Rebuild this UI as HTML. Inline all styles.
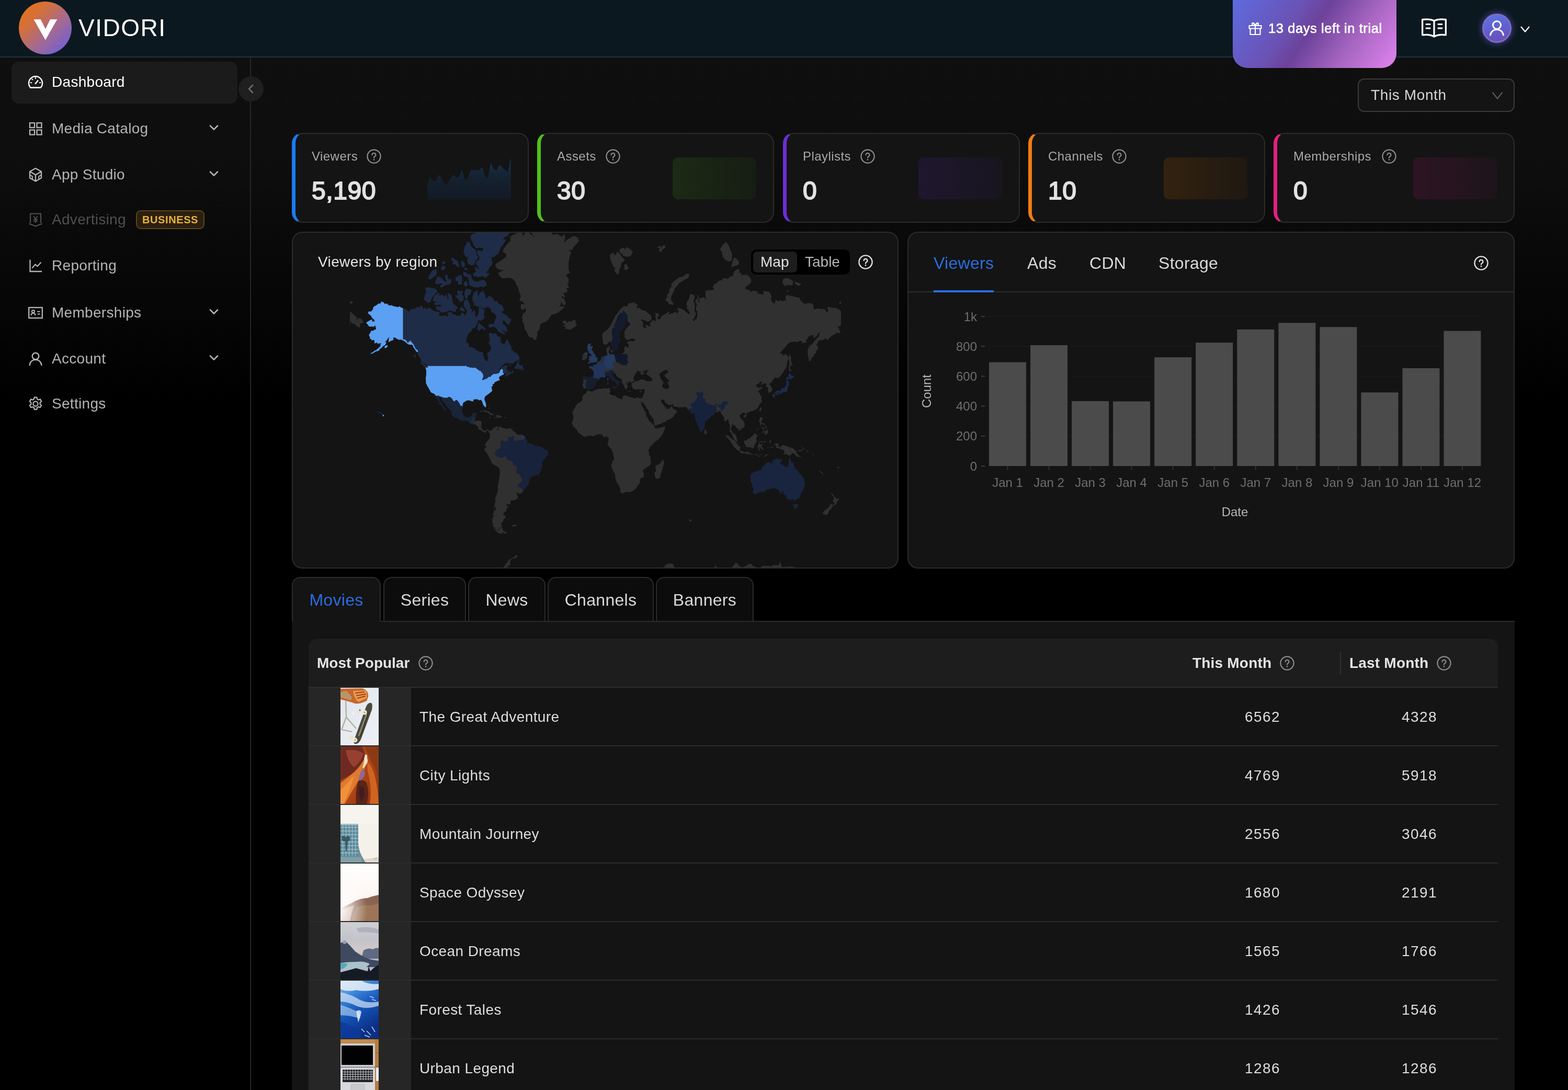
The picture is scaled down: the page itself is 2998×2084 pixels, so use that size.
<!DOCTYPE html><html><head><meta charset="utf-8"><title>Vidori Dashboard</title><style>
*{box-sizing:border-box;margin:0;padding:0}
html,body{width:2998px;height:2084px;overflow:hidden;background:#000}
body{font-family:"Liberation Sans",Arial,sans-serif;color:#dcdcdc;position:relative;
 background:linear-gradient(180deg,#0f0f0f 0px,#0e0e0e 300px,#000 780px,#000 100%)}
#root{position:absolute;left:0;top:0;width:2998px;height:2084px;will-change:transform}
.abs{position:absolute}
#hdr{position:absolute;left:0;top:0;width:2998px;height:110px;background:#0c181f;border-bottom:2px solid #22323c}
#logo{position:absolute;left:36px;top:3px;width:101px;height:101px;border-radius:50%;
 background:linear-gradient(135deg,#e8701a 8%,#d4703a 30%,#a0689a 62%,#6d5fd8 92%)}
#brand{position:absolute;left:150px;top:26px;font-size:46px;line-height:54px;color:#fff;letter-spacing:1.5px;font-weight:400}
#trial{position:absolute;left:2357px;top:-30px;width:313px;height:160px;border-radius:28px;
 background:linear-gradient(125deg,#5b6fe6 0%,#6b52b4 38%,#6c429a 50%,#a565c0 72%,#e184f0 100%)}
#trial span{position:absolute;left:68px;top:67px;font-size:25.4px;line-height:34px;font-weight:400;-webkit-text-stroke:0.7px #fff;color:#fff;white-space:nowrap;letter-spacing:0.62px}
#side{position:absolute;left:0;top:110px;width:480px;height:1974px;border-right:2px solid #262626}
.mi{position:absolute;left:22px;width:432px;height:80px;border-radius:14px;color:#b4b4b4;font-size:28px}
.mi.act{background:#1b1b1b;color:#fff}
.mi.dis{color:#4f4f4f}
.mi .ic{position:absolute;left:31px;top:24px;width:30px;height:30px}
.mi .tx{position:absolute;left:77px;top:21px;line-height:36px;white-space:nowrap;letter-spacing:0.3px}
.mi .chev{position:absolute;left:377px;top:27px;width:20px;height:20px}
.badge{position:absolute;left:238px;top:21px;width:131px;height:36px;border:2px solid #5e4514;border-radius:9px;background:#2a1f12;color:#e8b13a;
 font-size:20px;font-weight:700;line-height:32px;text-align:center;letter-spacing:0.6px}
#collapse{position:absolute;left:456px;top:146px;width:48px;height:48px;border-radius:50%;background:#1f1f1f}
.card{position:absolute;background:#141414;border:2px solid #2b2b2b;border-radius:20px;overflow:hidden}
.stat .lbl{position:absolute;left:31px;top:27px;font-size:24px;line-height:32px;color:#a9a9a9;letter-spacing:0.45px;white-space:nowrap}
.stat .val{position:absolute;left:31px;top:79px;font-size:48px;line-height:60px;color:#e2e2e2;font-weight:400;-webkit-text-stroke:1.9px #e2e2e2;letter-spacing:0.6px}
.stat .bar{display:none}
.stat .spark{position:absolute;right:32px;top:45px;width:160px;height:80px;border-radius:10px}
.q{position:absolute}
</style></head><body><div id="root"><div id="hdr"><div id="logo"><svg width="101" height="101" viewBox="0 0 101 101"><path d="M28.5 34h13.200l9.200 18.500L60 34h13.300L50.800 73.500z" fill="#fff"/></svg></div><div id="brand">VIDORI</div><div id="trial"><svg class="abs" style="left:29px;top:70px" width="28" height="28" viewBox="0 0 28 28" fill="none" stroke="#fff" stroke-width="2.200" stroke-linejoin="round"><rect x="2.500" y="9" width="23" height="5.500"/><path d="M4.500 14.500V26h19V14.500M14 9v17"/><path d="M14 9C11 9 8 8 8 5.500S11.500 2.500 14 9zM14 9c3 0 6-1 6-3.500S16.500 2.500 14 9z"/></svg><span>13 days left in trial</span></div><svg class="abs" style="left:2717px;top:34px" width="50" height="40" viewBox="0 0 52 42" fill="none" stroke="#fff" stroke-width="3.400" stroke-linejoin="round"><path d="M26 6C20 3 10 2.500 2.500 3.500v31C10 33.500 20 34 26 38c6-4 16-4.500 23.500-3.500v-31C42 2.500 32 3 26 6z"/><path d="M26 6v32" /><path d="M9 13h10M9 21h10M33 13h10M33 21h10" stroke-width="3"/></svg><div class="abs" style="left:2834px;top:26px;width:56px;height:56px;border-radius:50%;background:linear-gradient(165deg,#5a70e4 10%,#6a4fb6 90%);border:3px solid #7d6cc6;box-shadow:0 0 12px 2px rgba(110,100,220,.5)"><svg width="50" height="50" viewBox="0 0 50 50" fill="none" stroke="#fff" stroke-width="3" stroke-linecap="round"><circle cx="25" cy="19" r="7.500"/><path d="M12.500 38c1.500-7 6.500-10.500 12.500-10.500S36 31 37.500 38"/></svg></div><svg class="abs" style="left:2906px;top:48px" width="20" height="16" viewBox="0 0 20 16" fill="none" stroke="#fff" stroke-width="2.200"><path d="M2 3l8 9.500L18 3"/></svg></div><div id="side"><div class="mi act" style="top:8px"><svg class="ic" viewBox="0 0 30 30" fill="none" stroke="currentColor" stroke-width="2.4" stroke-linecap="round" stroke-linejoin="round"><path d="M5.2 25.5h19.6a13 13 0 1 0-19.6 0z"/><path d="M15 17.5l4.3-5.3" stroke-width="2.6"/><circle cx="15" cy="17.6" r="1.4" fill="currentColor" stroke="none"/><path d="M15 6.4v1.6M8.3 9.3l1.1 1.1M5.6 16h1.6M22.8 16h1.6" stroke-width="2"/></svg><span class="tx">Dashboard</span></div><div class="mi " style="top:97px"><svg class="ic" viewBox="0 0 30 30" fill="none" stroke="currentColor" stroke-width="2.3"><rect x="4" y="4" width="9" height="9"/><rect x="17.5" y="4" width="9" height="9"/><rect x="4" y="17.5" width="9" height="9"/><rect x="17.5" y="17.5" width="9" height="9"/></svg><span class="tx">Media Catalog</span><svg class="chev" viewBox="0 0 20 20" fill="none" stroke="currentColor" stroke-width="2.6" stroke-linecap="round" stroke-linejoin="round"><path d="M3 6.500l7 7 7-7"/></svg></div><div class="mi " style="top:185px"><svg class="ic" viewBox="0 0 30 30" fill="none" stroke="currentColor" stroke-width="2.3" stroke-linejoin="round"><path d="M15 2.8l11 6.2v12.2L15 27.4 4 21.2V9z"/><path d="M4.4 9.2L15 15.2l10.6-6M15 15.2v12"/><path d="M4.2 15.5l4.6 2.6v5.2M25.8 15.5l-4.6 2.6v5.2" stroke-width="2"/></svg><span class="tx">App Studio</span><svg class="chev" viewBox="0 0 20 20" fill="none" stroke="currentColor" stroke-width="2.6" stroke-linecap="round" stroke-linejoin="round"><path d="M3 6.500l7 7 7-7"/></svg></div><div class="mi dis" style="top:271px"><svg class="ic" viewBox="0 0 30 30" fill="none" stroke="currentColor" stroke-width="2.2" stroke-linejoin="round"><path d="M5 21V3.5h20V21"/><path d="M2.5 22.5L15 27.5l12.5-5" /><path d="M11 8l4 5.5L19 8M15 13.5V21M11.2 14.5h7.6M11.2 17.7h7.6" stroke-width="1.9"/></svg><span class="tx">Advertising</span><span class="badge">BUSINESS</span></div><div class="mi " style="top:359px"><svg class="ic" viewBox="0 0 30 30" fill="none" stroke="currentColor" stroke-width="2.3" stroke-linejoin="miter"><path d="M4.5 3.5v22.5h22.5"/><path d="M8.5 19.5l6-7 4 3.5 7-7.5" stroke-width="2.2"/></svg><span class="tx">Reporting</span></div><div class="mi " style="top:449px"><svg class="ic" viewBox="0 0 30 30" fill="none" stroke="currentColor" stroke-width="2.3"><rect x="2.2" y="5" width="25.6" height="20"/><circle cx="10.5" cy="12.6" r="2.5" stroke-width="2"/><path d="M6.3 20c.4-2.8 2-4.2 4.2-4.2s3.8 1.4 4.2 4.2M18 12.8h5.5M18.8 17.4h4.7" stroke-width="2"/></svg><span class="tx">Memberships</span><svg class="chev" viewBox="0 0 20 20" fill="none" stroke="currentColor" stroke-width="2.6" stroke-linecap="round" stroke-linejoin="round"><path d="M3 6.500l7 7 7-7"/></svg></div><div class="mi " style="top:537px"><svg class="ic" viewBox="0 0 30 30" fill="none" stroke="currentColor" stroke-width="2.4" stroke-linecap="round"><circle cx="15" cy="10" r="6.3"/><path d="M3.6 27c1-6.6 5.6-10.3 11.4-10.3S25.4 20.400 26.4 27"/></svg><span class="tx">Account</span><svg class="chev" viewBox="0 0 20 20" fill="none" stroke="currentColor" stroke-width="2.6" stroke-linecap="round" stroke-linejoin="round"><path d="M3 6.500l7 7 7-7"/></svg></div><div class="mi " style="top:623px"><svg class="ic" viewBox="0 0 30 30" fill="none" stroke="currentColor" stroke-width="2.2" stroke-linejoin="round"><circle cx="15" cy="15" r="4.6"/><path d="M12.7 2.600h4.6l.8 3.500 2.400 1.400 3.400-1.100 2.300 4-2.600 2.400v2.800l2.600 2.400-2.300 4-3.400-1.100-2.400 1.400-.8 3.500h-4.600l-.8-3.500-2.400-1.400-3.400 1.100-2.300-4 2.600-2.400v-2.800l-2.600-2.400 2.300-4 3.400 1.100 2.400-1.400z"/></svg><span class="tx">Settings</span></div></div><div id="collapse"><svg class="abs" style="left:15px;top:14px" width="18" height="20" viewBox="0 0 18 20" fill="none" stroke="#6a6a6a" stroke-width="2.800" stroke-linecap="round" stroke-linejoin="round"><path d="M12 3L5 10l7 7"/></svg></div><div class="abs" style="left:2596px;top:150px;width:300px;height:64px;border:2px solid #3a3a3a;border-radius:12px;background:#141414"><span class="abs" style="left:23px;top:12px;font-size:28px;line-height:36px;color:#d6d6d6;letter-spacing:0.62px;white-space:nowrap">This Month</span><svg class="abs" style="left:253px;top:21px" width="24" height="20" viewBox="0 0 24 20" fill="none" stroke="#5a5a5a" stroke-width="2.200"><path d="M2.500 3.500l9.500 12 9.500-12"/></svg></div><div class="card stat" style="left:558px;top:254px;width:453px;height:172px;border-left:7px solid #1a7bf2"><div class="lbl">Viewers</div><svg class="q" style="left:136px;top:29px" width="28" height="28" viewBox="0 0 28 28"><circle cx="14" cy="14" r="12.6" fill="none" stroke="#8c8c8c" stroke-width="2.2"/><path d="M10.6 11.2a3.4 3.4 0 1 1 4.9 3.05c-.95.5-1.5 1.1-1.5 2.1v.5" fill="none" stroke="#8c8c8c" stroke-width="2.09" stroke-linecap="round"/><circle cx="14" cy="20.3" r="1.35" fill="#8c8c8c"/></svg><div class="val">5,190</div><svg class="spark" style="border-radius:0;overflow:visible" viewBox="0 0 160 80"><defs><linearGradient id="sg" x1="0" y1="0" x2="0" y2="1"><stop offset="0" stop-color="#17324f"/><stop offset=".5" stop-color="#15212f"/><stop offset="1" stop-color="#131a26"/></linearGradient></defs><path d="M0 80 L0 52.3 L1 50 L5.2 37.1 L11 45.8 L16.2 44.4 L22 33.2 L27.2 38.7 L33.4 52.8 L38.2 51.2 L42.9 42.3 L49.4 32.9 L55.4 38.5 L60.6 37.6 L66.2 23 L72.1 42.9 L76.8 40.8 L82.9 24.3 L99.3 24 L104.5 18.3 L110.3 35.5 L115.5 40.6 L121.2 9.4 L127 22 L132.2 25.1 L138 13.4 L149 24.6 L154.2 27.2 L159.7 0.5 L160 80Z" fill="url(#sg)"/></svg></div><div class="card stat" style="left:1027px;top:254px;width:453px;height:172px;border-left:7px solid #4fc21a"><div class="lbl">Assets</div><svg class="q" style="left:124px;top:29px" width="28" height="28" viewBox="0 0 28 28"><circle cx="14" cy="14" r="12.6" fill="none" stroke="#8c8c8c" stroke-width="2.2"/><path d="M10.6 11.2a3.4 3.4 0 1 1 4.9 3.05c-.95.5-1.5 1.1-1.5 2.1v.5" fill="none" stroke="#8c8c8c" stroke-width="2.09" stroke-linecap="round"/><circle cx="14" cy="20.3" r="1.35" fill="#8c8c8c"/></svg><div class="val">30</div><div class="spark" style="background:linear-gradient(90deg,#1c2a14,#161d14)"></div></div><div class="card stat" style="left:1497px;top:254px;width:453px;height:172px;border-left:7px solid #6a2fd6"><div class="lbl">Playlists</div><svg class="q" style="left:141px;top:29px" width="28" height="28" viewBox="0 0 28 28"><circle cx="14" cy="14" r="12.6" fill="none" stroke="#8c8c8c" stroke-width="2.2"/><path d="M10.6 11.2a3.4 3.4 0 1 1 4.9 3.05c-.95.5-1.5 1.1-1.5 2.1v.5" fill="none" stroke="#8c8c8c" stroke-width="2.09" stroke-linecap="round"/><circle cx="14" cy="20.3" r="1.35" fill="#8c8c8c"/></svg><div class="val">0</div><div class="spark" style="background:linear-gradient(90deg,#1f172e,#18151f)"></div></div><div class="card stat" style="left:1966px;top:254px;width:453px;height:172px;border-left:7px solid #f07c12"><div class="lbl">Channels</div><svg class="q" style="left:153px;top:29px" width="28" height="28" viewBox="0 0 28 28"><circle cx="14" cy="14" r="12.6" fill="none" stroke="#8c8c8c" stroke-width="2.2"/><path d="M10.6 11.2a3.4 3.4 0 1 1 4.9 3.05c-.95.5-1.5 1.1-1.5 2.1v.5" fill="none" stroke="#8c8c8c" stroke-width="2.09" stroke-linecap="round"/><circle cx="14" cy="20.3" r="1.35" fill="#8c8c8c"/></svg><div class="val">10</div><div class="spark" style="background:linear-gradient(90deg,#33220f,#1f1812)"></div></div><div class="card stat" style="left:2435px;top:254px;width:461px;height:172px;border-left:7px solid #e0207f"><div class="lbl">Memberships</div><svg class="q" style="left:200px;top:29px" width="28" height="28" viewBox="0 0 28 28"><circle cx="14" cy="14" r="12.6" fill="none" stroke="#8c8c8c" stroke-width="2.2"/><path d="M10.6 11.2a3.4 3.4 0 1 1 4.9 3.05c-.95.5-1.5 1.1-1.5 2.1v.5" fill="none" stroke="#8c8c8c" stroke-width="2.09" stroke-linecap="round"/><circle cx="14" cy="20.3" r="1.35" fill="#8c8c8c"/></svg><div class="val">0</div><div class="spark" style="background:linear-gradient(90deg,#2e1424,#1d141a)"></div></div><div class="card" style="left:558px;top:443px;width:1160px;height:644px"><svg class="abs" style="left:0;top:0" width="1156" height="640" viewBox="0 0 1156 640"><path d="M564.4 300.5L562.3 299.5L561.5 297.9L559.1 297.3L558.0 298.1L555.3 298.0L555.7 295.5L555.4 293.4L554.3 293.1L553.6 291.8L553.9 289.7L554.9 288.4L555.1 287.0L555.6 285.0L555.6 283.5L555.1 282.3L554.9 281.1L555.1 278.6L554.0 277.0L557.7 274.4L560.9 275.1L564.4 275.1L567.2 275.7L569.3 275.5L573.5 275.6L574.9 273.5L575.4 266.1L572.7 262.1L570.8 260.2L566.8 258.7L566.5 255.8L569.9 255.0L574.3 256.0L573.5 251.5L575.9 253.2L582.0 250.0L582.8 246.7L585.0 245.8L587.1 245.0L588.5 243.9L590.8 237.6L594.3 235.8L596.5 235.9L597.0 235.0L599.2 234.7L599.7 235.7L601.5 233.5L600.9 231.8L600.7 229.3L599.7 226.7L599.6 222.0L600.0 220.7L600.8 219.3L603.1 219.0L604.0 217.6L606.1 216.2L606.0 218.7L605.2 220.3L605.5 221.6L607.0 222.3L606.3 224.1L605.5 223.6L603.7 227.0L604.4 229.2L604.4 230.9L607.1 232.0L607.0 233.6L609.7 232.7L611.2 231.5L614.1 233.2L615.3 234.7L617.1 233.4L621.2 231.3L624.5 229.8L627.1 230.6L627.3 231.6L629.8 231.7L630.4 229.7L634.0 228.2L633.4 224.4L633.5 220.8L634.8 217.8L637.2 216.2L639.3 219.7L641.4 219.6L641.9 216.0L642.2 213.0L641.3 213.6L639.6 211.9L639.4 209.0L642.7 207.5L646.0 206.8L648.8 207.6L651.5 207.5L654.5 204.6L651.7 202.2L647.0 202.6L642.4 204.5L638.2 205.6L636.6 202.7L634.1 201.0L634.7 195.6L633.4 190.6L634.7 187.3L637.0 183.6L643.0 177.1L644.8 175.8L644.5 173.2L640.8 170.1L636.4 172.0L633.8 176.3L634.2 180.1L630.1 184.8L625.1 189.8L623.2 197.7L625.0 201.4L627.5 204.4L625.1 210.2L622.4 211.3L621.4 219.6L619.9 224.0L616.8 223.6L615.3 227.2L612.3 227.5L611.4 223.1L609.3 217.7L607.3 210.6L605.5 207.5L600.4 213.4L596.9 214.5L593.3 212.0L592.4 206.6L591.5 194.2L593.9 190.6L600.8 185.8L606.0 179.6L610.7 171.0L617.0 158.1L621.4 152.9L628.5 143.6L634.3 140.3L638.5 140.7L642.5 134.2L647.3 134.5L652.0 132.9L660.1 138.8L656.8 140.8L659.6 145.6L662.3 142.9L666.6 147.5L673.7 149.3L683.6 157.3L685.6 160.5L685.8 165.0L682.9 168.4L678.6 170.2L667.0 165.2L665.0 166.1L669.3 170.8L669.5 173.7L669.6 180.1L673.0 181.9L675.0 183.4L675.4 180.6L673.8 178.0L675.5 175.6L681.8 179.4L684.0 178.0L682.2 173.4L688.3 167.1L690.7 167.5L693.1 169.7L694.6 165.2L692.5 161.3L693.8 157.2L691.8 152.8L699.1 155.1L700.6 159.0L697.3 159.8L697.3 163.6L699.4 165.8L703.4 164.4L704.1 160.1L709.5 156.8L718.6 150.7L720.6 151.1L718.0 155.4L721.3 156.1L723.1 153.7L728.0 153.5L731.9 150.6L734.8 154.9L737.8 150.1L735.1 145.9L736.4 143.4L744.1 145.7L747.8 148.0L757.2 156.2L758.9 152.5L756.3 148.7L756.2 147.1L753.1 146.4L753.9 142.8L752.5 136.8L752.4 134.2L757.3 126.8L759.0 119.0L760.9 117.2L767.8 119.5L768.4 124.4L765.9 131.1L767.5 133.7L768.4 139.3L767.8 149.6L770.7 153.9L769.5 158.6L764.4 168.1L767.4 169.1L768.4 166.8L771.3 165.0L772.0 161.8L774.3 158.5L772.7 154.5L774.0 149.8L771.1 149.2L770.5 145.1L772.6 137.4L769.2 130.8L773.8 125.2L773.2 119.1L774.5 118.9L775.9 123.7L774.9 131.7L777.7 133.2L776.5 127.3L780.9 123.9L786.3 123.5L791.1 128.3L788.8 121.2L788.5 111.6L793.0 109.8L799.3 110.1L805.0 108.9L802.8 103.9L805.9 97.4L808.9 97.2L813.9 92.0L820.8 90.6L821.7 87.6L828.5 86.7L830.7 89.0L836.5 83.2L841.3 83.5L842.0 78.6L844.5 73.6L850.7 68.7L855.2 72.6L851.6 75.5L857.5 77.3L858.2 82.9L860.6 80.2L868.2 80.3L874.1 85.8L876.2 89.8L875.6 95.2L872.7 98.3L865.8 103.8L863.8 106.6L867.1 108.0L870.9 110.3L873.3 108.5L874.6 114.5L875.8 112.2L879.9 110.7L888.3 112.2L888.9 116.5L899.8 117.8L900.0 110.8L905.5 112.5L909.7 112.4L913.9 117.2L915.1 122.8L913.6 126.4L916.8 132.9L920.9 136.1L923.4 127.6L927.6 131.3L932.1 129.1L937.1 131.6L939.0 129.3L943.3 130.5L941.4 122.6L944.9 118.9L968.4 124.5L970.7 129.5L977.5 135.7L988.0 134.2L993.2 135.5L995.4 138.8L995.1 144.4L998.3 146.5L1001.8 145.0L1006.4 144.8L1011.3 146.3L1016.3 145.4L1020.8 151.9L1024.0 149.6L1021.9 144.9L1023.1 141.5L1031.4 143.6L1036.8 143.2L1044.3 146.8L1048.0 150.0L1048.0 176.6L1044.6 179.4L1041.2 178.9L1043.6 182.1L1045.2 186.9L1046.4 188.5L1046.7 190.8L1046.0 192.4L1041.1 191.1L1033.8 195.3L1031.5 196.0L1027.5 199.8L1023.7 203.0L1022.8 205.4L1019.0 201.8L1012.2 205.9L1011.1 204.0L1008.6 206.2L1005.1 205.5L1004.2 208.9L1001.1 213.7L1001.2 215.7L1004.1 216.8L1003.8 223.8L1001.4 223.9L1000.3 227.8L1001.4 229.7L996.8 232.1L995.9 237.1L992.0 238.2L991.2 242.5L987.5 246.4L986.5 243.5L985.4 237.3L983.9 227.4L985.2 220.9L987.4 218.0L987.5 215.8L991.6 214.6L996.2 208.4L1000.7 203.0L1005.4 198.7L1007.5 190.9L1004.3 191.4L1002.8 196.0L996.1 202.0L994.0 195.3L987.3 197.2L980.8 206.0L982.9 209.2L977.1 210.5L973.1 211.0L973.2 207.4L969.2 206.6L965.9 209.1L958.0 208.2L949.4 209.7L940.9 219.3L931.0 230.3L935.1 230.9L936.3 233.7L938.9 234.7L940.5 232.5L943.4 232.8L947.2 237.6L947.3 241.3L945.2 245.5L945.0 250.4L943.8 256.8L939.9 262.4L939.0 265.0L935.5 269.4L932.0 273.6L930.3 275.7L926.8 277.8L925.2 277.9L923.5 276.1L920.0 278.7L919.6 279.9L918.6 279.7L917.5 280.9L916.7 282.1L916.8 284.6L915.5 285.3L915.0 285.9L914.0 286.9L912.3 287.5L911.1 288.4L911.1 289.9L910.8 290.3L911.8 290.8L913.3 292.3L915.5 296.2L916.2 298.3L916.2 302.0L915.2 303.8L912.9 304.4L910.8 305.7L908.4 306.0L908.1 304.3L908.6 301.9L907.5 298.5L909.4 298.0L907.6 295.1L906.3 294.5L906.0 295.1L905.3 295.4L905.2 294.8L904.5 294.5L903.8 293.9L904.5 292.5L905.1 292.1L904.9 291.5L905.6 289.7L905.4 289.1L903.9 288.7L902.6 287.8L899.0 288.8L897.1 290.4L894.2 291.3L895.6 289.8L895.1 288.4L897.2 286.2L895.8 284.3L893.5 285.6L890.6 287.9L888.9 290.1L886.4 290.3L885.1 291.8L886.4 294.1L888.6 294.6L888.7 296.1L890.7 297.1L893.6 294.7L896.0 296.0L897.7 296.1L898.1 297.8L894.4 298.7L893.2 300.5L890.6 302.1L889.3 304.3L892.1 306.1L893.1 309.1L894.7 312.0L896.5 314.4L896.4 316.6L894.8 317.5L895.4 319.1L896.9 320.0L896.6 322.4L895.9 324.8L894.4 325.1L892.5 328.3L890.4 332.1L888.0 335.5L884.4 338.2L880.8 340.6L877.8 340.9L876.2 342.1L875.4 341.2L873.9 342.6L870.2 344.0L867.5 344.4L866.6 347.4L865.1 347.6L864.4 345.5L865.0 344.4L861.6 343.5L860.3 344.0L856.9 346.4L854.7 349.0L854.1 350.9L856.1 353.9L858.5 357.4L860.9 359.1L862.5 361.3L863.7 366.2L863.3 370.9L861.2 372.7L858.2 374.4L856.0 376.6L852.8 379.1L851.8 377.4L852.6 375.6L850.6 374.1L848.5 373.7L847.4 372.3L846.1 369.6L843.7 368.3L841.5 368.4L841.9 366.3L839.6 366.3L839.4 369.2L838.0 373.1L837.1 375.5L837.3 377.4L839.0 377.5L840.1 379.9L840.5 382.2L842.0 383.7L843.6 384.0L844.9 385.3L845.5 385.6L847.1 387.2L848.1 388.9L848.3 390.7L848.0 391.9L848.3 392.8L848.5 394.3L849.4 395.0L850.4 397.3L850.4 398.2L848.5 398.4L846.0 396.5L843.0 394.4L842.6 393.1L841.2 391.3L840.8 389.1L839.9 387.7L840.1 385.8L839.6 384.7L838.5 383.7L838.1 382.4L836.7 380.9L835.4 379.7L835.0 381.2L834.5 379.7L834.8 378.1L835.5 375.6L835.3 373.6L836.1 371.6L835.2 370.0L835.4 367.1L834.4 365.7L833.5 362.5L833.1 359.0L831.9 356.8L830.2 358.1L827.3 360.1L825.8 359.9L824.2 359.2L825.1 355.8L824.5 353.3L822.5 350.1L822.8 349.1L821.3 348.7L819.4 346.5L818.7 345.0L818.5 343.6L818.0 342.2L817.0 340.6L814.6 340.5L814.8 341.7L814.0 343.2L812.9 342.6L812.5 343.1L811.7 342.8L810.7 342.6L810.4 343.6L808.6 343.6L805.4 344.2L805.5 346.3L804.1 347.9L800.4 349.8L797.4 353.0L795.5 354.8L792.9 356.5L792.9 357.8L791.6 358.5L789.2 359.5L788.0 359.6L787.2 361.6L787.8 365.1L787.9 367.4L786.8 369.9L786.8 374.4L785.4 374.6L784.3 376.6L785.1 377.4L782.7 378.2L781.8 380.0L780.7 380.7L778.3 378.3L777.1 374.6L776.1 371.9L775.2 370.7L773.8 368.1L773.1 364.7L772.7 363.0L770.3 359.3L769.2 354.1L768.4 350.5L768.4 347.2L767.9 344.6L764.2 346.2L762.3 345.9L758.9 342.5L760.1 341.5L759.4 340.4L756.3 338.0L754.4 337.3L753.6 335.2L751.6 333.0L746.8 333.5L742.6 333.6L738.9 334.0L734.0 333.1L731.2 332.5L728.2 332.1L727.1 328.5L725.8 328.0L723.8 328.5L721.2 329.9L718.0 329.0L715.4 326.7L712.9 325.9L711.1 323.1L709.2 319.1L707.8 319.5L706.2 318.5L705.2 319.7L703.6 319.6L704.2 320.9L703.9 321.6L704.8 323.8L705.8 326.4L707.1 327.1L707.5 328.1L709.3 329.3L709.5 330.5L709.2 331.5L709.5 332.5L710.3 333.3L710.6 334.2L711.0 334.9L710.8 332.8L711.5 331.3L712.3 331.0L713.1 331.9L713.1 333.6L712.5 335.3L713.0 336.4L713.5 336.3L713.6 337.0L715.6 336.6L717.8 336.7L719.4 336.7L721.1 334.8L723.1 333.0L724.7 331.2L725.5 330.2L725.8 330.4L725.6 331.6L725.2 332.2L725.6 334.5L726.8 336.4L728.2 337.4L730.1 337.8L731.7 338.3L732.9 340.0L733.6 340.9L734.5 341.3L734.5 341.9L733.5 343.6L733.1 344.4L732.0 345.3L731.1 347.1L729.9 347.0L729.3 347.7L728.9 349.1L729.2 350.9L729.0 351.3L727.8 351.2L726.2 352.3L725.9 353.6L725.3 354.2L723.7 354.2L722.7 354.9L722.7 356.0L721.4 356.7L720.0 356.5L718.2 357.4L717.0 357.5L715.1 358.3L714.6 359.5L714.6 360.4L712.0 361.5L707.8 362.8L705.5 364.7L704.3 364.9L703.5 364.7L702.0 365.8L700.4 366.3L698.2 366.5L697.5 366.6L696.9 367.3L696.2 367.5L695.8 368.2L694.5 368.1L693.7 368.5L691.9 368.4L691.2 366.8L691.3 365.3L690.9 364.6L690.4 362.6L689.6 361.5L690.2 361.3L689.9 360.1L690.2 359.6L690.1 358.4L689.7 357.2L689.0 356.4L688.8 355.3L687.4 354.3L686.0 352.0L685.3 349.8L683.5 347.9L682.3 347.4L680.6 344.7L680.3 342.8L680.4 341.1L678.9 338.0L677.7 336.9L676.3 336.3L675.4 334.6L675.6 334.0L674.8 332.5L674.1 331.8L673.1 329.7L671.5 327.3L670.1 325.3L668.8 325.3L669.2 323.7L669.3 322.6L669.7 321.4L669.6 321.0L667.9 315.8L668.6 314.8L668.5 314.6L669.1 313.2L669.7 310.9L670.1 310.1L671.0 307.5L672.3 305.3L672.2 302.7L672.8 301.4L671.8 300.0L672.8 298.7L671.2 299.0L669.0 298.2L667.3 300.1L663.3 300.5L661.2 298.8L658.4 298.6L657.8 300.0L656.0 300.4L653.4 298.6L650.6 298.7L649.1 295.5L647.2 293.6L648.4 291.0L646.8 289.4L649.7 286.2L653.7 286.0L654.8 283.4L654.1 283.1L653.6 284.0L650.5 284.2L649.4 285.2L647.3 287.1L646.4 285.5L646.5 284.8L644.9 284.7L643.5 284.3L640.3 285.2L642.2 287.2L640.8 287.7L639.4 287.7L638.0 286.0L637.5 286.7L638.1 288.7L639.4 290.3L638.4 291.1L639.9 292.6L641.2 293.6L641.2 295.4L638.8 294.6L639.6 296.2L637.9 296.6L638.9 299.5L637.2 299.5L635.0 298.1L634.1 295.5L633.6 293.3L632.6 291.7L631.2 289.8L631.1 288.9L630.6 288.6L630.6 287.9L629.1 286.7L628.9 285.1L629.1 282.7L629.5 281.7L629.0 281.1L627.7 279.7L626.6 279.0L624.2 277.7L622.7 276.4L620.3 275.3L618.1 272.7L618.6 272.4L617.4 270.8L617.4 269.6L615.7 269.0L614.9 270.6L614.1 269.4L614.2 268.1L614.3 268.0L614.9 267.7L612.8 267.1L610.7 268.5L610.8 270.3L610.5 271.4L611.3 273.2L613.8 275.0L615.1 278.0L618.0 280.8L620.1 280.8L620.7 281.6L619.9 282.3L622.3 283.5L624.2 284.6L626.4 286.4L626.7 287.0L626.2 288.2L624.8 286.6L622.5 286.1L621.4 288.3L623.3 289.6L623.0 291.3L621.9 291.5L620.5 294.3L619.4 294.6L619.4 293.6L619.9 291.8L620.5 291.1L619.5 289.2L618.7 287.4L617.6 287.0L616.8 285.5L615.2 284.9L614.1 283.5L612.1 283.3L610.1 281.7L607.7 279.4L605.9 277.4L605.1 273.8L603.8 273.4L601.7 272.2L600.5 272.7L599.0 274.4L597.9 274.7L595.5 276.7L590.4 275.7L586.6 276.9L586.3 279.0L586.4 281.1L584.0 283.4L580.6 284.1L580.4 285.3L578.8 287.2L577.8 289.9L578.8 291.8L577.3 293.3L576.7 295.5L574.7 296.2L572.9 298.7L567.1 298.6L565.5 299.8L564.5 301.0ZM563.1 301.5L564.9 301.6L566.5 303.0L569.0 302.8L571.7 303.5L572.8 303.5L575.4 301.8L579.8 299.9L582.3 298.9L586.7 298.3L591.0 298.0L592.4 298.5L594.8 297.2L597.6 297.2L598.7 298.0L600.5 297.8L603.3 296.4L605.1 296.8L605.1 298.5L607.3 297.3L607.5 297.9L606.1 299.5L606.1 301.0L607.0 301.8L606.7 304.6L605.0 306.2L605.5 307.9L606.8 307.9L607.5 309.4L608.5 309.9L611.5 311.0L612.6 310.7L614.8 311.2L618.3 312.6L619.5 315.3L621.8 315.9L625.5 317.2L628.3 318.7L629.5 317.9L630.8 316.5L630.2 314.2L631.0 312.7L632.9 311.2L634.7 310.8L638.2 311.5L639.1 312.8L640.1 312.8L640.9 313.4L643.5 313.7L644.1 314.7L647.6 314.7L650.1 315.5L652.7 316.4L653.9 316.9L655.9 315.9L657.0 315.1L659.3 314.8L661.2 315.2L661.9 316.7L662.5 315.7L664.5 316.4L666.6 316.6L667.9 315.8L669.6 321.0L668.9 322.2L668.3 324.5L667.6 326.0L667.0 326.5L666.1 325.6L664.9 324.2L663.1 320.0L662.8 320.2L663.9 323.4L665.5 326.4L667.4 330.9L668.4 332.5L669.3 334.1L671.6 337.3L671.1 337.8L671.2 339.6L674.2 342.2L674.7 342.8L675.5 345.5L674.9 346.0L675.3 348.9L676.3 352.2L677.3 352.8L678.7 353.9L680.2 357.0L680.9 359.5L682.3 360.8L685.9 363.4L687.3 364.9L688.8 366.5L689.6 367.4L690.9 368.2L691.5 369.0L691.4 370.1L689.9 370.8L691.0 371.5L691.9 372.0L692.4 373.1L693.6 374.2L694.9 374.2L697.3 373.5L700.2 373.2L702.5 372.4L703.8 372.2L704.7 371.7L706.2 371.6L707.0 371.6L708.2 371.2L709.6 370.9L710.8 370.0L711.8 370.0L711.9 370.7L711.6 372.3L711.7 373.7L711.1 374.6L710.3 377.5L709.1 380.5L707.5 383.8L705.2 387.7L703.0 390.6L699.9 394.1L697.3 396.3L693.4 398.9L691.0 400.8L688.2 404.0L687.6 405.4L687.0 406.0L685.1 407.0L684.5 408.1L683.5 408.3L683.1 410.2L682.3 411.2L681.8 413.0L680.7 413.8L679.5 417.0L679.7 418.5L681.4 419.5L681.4 420.2L680.7 421.7L680.9 422.6L680.7 423.8L681.6 425.5L682.7 428.1L683.7 428.7L684.1 429.9L684.0 432.5L684.3 434.8L684.4 439.0L684.9 440.3L684.1 442.3L683.1 444.2L681.4 445.8L679.0 446.9L676.1 448.2L673.1 451.2L672.1 451.6L670.3 453.6L669.2 454.2L669.0 456.2L670.3 458.3L670.8 460.0L670.8 460.8L671.3 460.7L671.2 463.5L670.8 464.8L671.4 465.3L671.0 466.5L669.9 467.5L667.8 468.5L664.6 470.0L663.5 471.1L663.7 472.3L664.4 472.5L664.1 474.0L663.5 476.2L663.2 478.6L662.5 479.9L660.7 481.5L660.2 481.9L659.1 483.4L658.4 485.0L656.9 487.1L654.0 490.3L652.1 492.2L650.1 493.6L647.4 494.8L646.1 495.0L645.7 495.8L644.2 495.4L642.9 496.0L640.0 495.3L638.5 495.7L637.4 495.6L634.7 496.8L632.5 497.3L630.8 498.5L629.7 498.6L628.6 497.4L627.7 497.4L626.5 496.0L626.4 496.4L626.1 495.6L626.1 493.7L625.3 491.7L626.1 491.1L626.0 488.7L624.3 485.9L623.0 483.3L621.1 479.4L619.2 477.2L618.2 475.0L617.6 472.2L616.9 470.1L616.1 465.7L616.0 462.3L615.7 460.8L614.7 459.6L613.3 457.3L612.0 453.9L611.4 452.2L609.3 449.5L609.1 447.4L608.9 445.7L609.2 443.3L610.1 440.9L610.3 439.7L611.1 437.3L611.7 436.2L613.2 434.4L614.1 433.2L614.3 431.3L614.2 429.8L613.4 428.8L612.7 427.2L612.1 425.6L612.2 425.1L613.0 424.0L612.2 421.5L611.7 419.7L610.4 418.0L610.6 417.5L610.3 416.7L609.6 414.8L607.4 412.0L604.8 409.3L603.0 407.2L601.5 404.5L601.5 403.6L602.1 402.8L602.7 400.9L603.3 399.0L602.8 398.6L603.7 395.7L604.1 393.6L603.0 391.9L601.8 391.4L601.3 390.2L600.6 389.9L600.7 389.1L598.0 390.1L597.0 390.0L596.0 390.5L593.9 390.5L592.5 388.8L591.6 386.9L589.8 385.2L587.8 385.2L585.5 385.2L583.4 385.6L581.3 386.1L577.2 387.7L575.7 388.5L573.4 389.3L571.0 388.6L569.9 388.6L568.0 388.1L566.4 388.1L563.3 388.6L561.5 389.3L558.9 390.3L557.7 390.2L555.0 389.0L552.7 387.0L550.4 385.6L548.7 383.8L548.0 383.7L546.1 382.6L544.7 381.2L544.3 380.2L543.9 378.3L542.8 376.7L541.8 375.7L541.1 375.3L540.5 374.8L540.2 373.6L539.8 373.1L539.0 372.6L537.7 371.5L536.5 371.3L536.0 370.6L536.0 370.2L535.2 369.6L535.0 369.1L534.6 367.0L534.9 365.8L533.8 363.7L532.5 362.8L533.7 362.2L534.9 360.3L535.6 358.9L535.3 357.5L536.1 356.1L536.4 353.6L536.1 350.8L535.8 349.5L536.0 348.1L535.4 346.8L534.0 345.6L534.1 344.4L534.2 343.1L535.2 342.3L536.1 340.8L535.9 339.9L536.8 337.9L538.3 336.1L539.1 335.6L539.8 333.9L539.9 332.4L540.8 330.6L542.6 329.5L544.2 326.5L545.6 325.4L548.0 325.0L550.1 323.0L551.4 322.2L553.6 319.7L552.9 315.9L553.9 313.3L554.2 311.7L555.9 309.6L558.5 308.1L560.5 306.9L562.2 303.6ZM376.7 378.9L378.2 379.1L381.1 377.0L383.1 372.5L387.1 372.2L390.2 370.3L392.5 369.0L392.3 371.4L391.0 371.7L391.7 372.8L391.7 374.2L390.4 375.7L391.5 377.8L392.5 377.8L393.3 375.8L392.4 374.9L392.3 372.8L395.4 371.7L395.1 370.5L396.2 369.5L397.0 371.4L398.8 371.7L400.6 373.0L400.6 373.9L405.8 373.7L407.1 374.9L409.2 375.1L410.8 374.3L413.9 373.5L417.0 373.5L415.0 374.3L415.7 375.5L417.8 375.7L419.9 377.0L420.2 379.1L421.6 379.1L424.3 380.7L425.9 382.4L427.0 383.8L429.6 386.0L432.6 386.5L435.0 385.9L437.7 386.6L440.5 387.5L443.4 389.7L443.8 390.7L444.7 390.6L446.8 396.6L448.2 397.1L446.3 401.1L447.0 401.8L451.7 402.2L451.7 404.8L453.8 403.1L457.0 404.1L461.4 405.6L462.7 407.2L462.2 408.6L465.3 407.8L470.3 409.2L474.2 409.1L478.1 411.3L481.5 414.1L483.4 414.9L485.6 415.1L486.7 415.9L487.5 419.2L487.9 420.8L486.9 425.2L485.6 426.9L482.0 430.5L480.2 433.6L478.3 435.9L477.6 436.0L476.9 437.9L477.0 443.0L476.4 447.2L476.1 449.0L475.2 450.1L474.8 453.7L472.2 457.4L471.7 460.3L469.6 461.5L469.0 463.2L466.2 463.2L462.0 464.3L460.2 465.5L457.3 466.4L454.2 468.7L452.0 471.5L451.6 473.7L452.1 475.3L451.6 478.3L451.0 479.7L449.2 481.3L446.3 486.7L444.0 489.1L442.2 490.5L441.0 493.5L439.3 495.3L438.2 497.3L435.2 499.0L433.3 498.4L431.9 498.7L429.5 497.4L427.7 497.4L426.1 495.7L425.9 497.4L429.3 500.1L428.9 502.3L430.5 503.7L430.4 505.3L427.9 509.5L424.0 511.3L418.8 512.0L415.9 511.7L416.4 513.6L415.9 516.2L416.4 517.9L414.8 519.1L412.2 519.6L409.7 518.3L408.6 519.2L409.0 522.7L410.8 523.8L412.2 522.7L413.0 524.5L410.6 525.6L408.5 527.9L408.1 531.5L407.5 533.5L405.0 533.5L403.0 535.4L402.2 538.2L404.8 540.9L407.3 541.7L406.4 545.2L403.3 547.4L401.6 552.1L399.2 553.7L398.2 555.6L399.0 560.0L400.7 562.4L399.6 562.2L397.3 562.2L396.1 563.2L393.7 564.8L393.3 568.8L392.2 569.0L389.2 567.5L386.3 564.5L383.0 562.0L382.2 559.4L382.9 556.9L381.6 554.2L381.3 547.3L382.4 543.6L385.1 540.6L381.2 539.5L383.7 536.1L384.6 530.0L387.5 531.3L388.8 523.9L387.1 522.9L386.3 527.4L384.6 526.8L385.4 521.8L386.3 515.4L387.5 513.1L386.8 509.8L386.6 506.1L387.7 506.0L389.3 500.8L391.1 495.7L392.2 491.1L391.6 486.5L392.3 484.0L392.0 480.3L393.6 476.7L394.0 471.0L394.9 465.1L395.7 458.7L395.5 454.2L395.0 450.3L392.3 448.7L392.1 447.6L386.9 444.9L382.3 441.9L380.3 440.2L379.2 438.0L379.6 437.2L377.4 433.7L374.8 428.8L372.3 423.6L371.3 422.3L370.5 420.4L368.4 418.7L366.6 417.6L367.4 416.5L366.2 414.0L367.0 412.1L369.1 410.5L370.4 408.5L369.9 407.4L368.9 408.6L367.3 407.5L367.9 406.7L367.4 404.4L368.3 404.0L368.8 402.3L369.8 400.7L369.6 399.6L371.0 399.0L372.8 398.0L372.5 397.2L373.4 397.0L373.3 395.7L373.9 394.7L375.2 394.6L376.3 392.9L377.3 391.6L376.4 390.9L376.9 389.4L376.3 387.0L376.8 386.3L376.4 384.1L375.4 382.7L375.7 381.4L376.5 381.6L377.0 380.8L376.4 379.3ZM337.9 363.3L340.5 364.9L343.5 365.4L345.4 366.1L347.7 367.0L349.5 366.4L350.3 367.5L352.9 370.1L354.9 372.5L354.7 375.0L356.5 376.5L357.7 376.4L359.7 377.3L360.4 377.9L360.4 378.5L362.1 380.1L362.4 380.5L365.3 380.4L365.9 381.4L367.5 382.7L368.7 382.6L369.8 381.9L368.6 380.4L370.5 379.1L372.1 378.0L373.7 379.6L374.6 379.8L373.9 380.5L375.4 382.7L375.7 381.4L376.5 381.6L377.0 380.8L376.4 379.3L376.7 378.9L374.9 377.4L372.4 376.6L371.0 376.4L370.1 377.2L367.4 378.4L365.4 377.9L364.1 378.1L364.1 377.5L363.2 376.5L361.0 374.3L360.3 372.9L359.8 371.7L359.9 370.4L360.3 369.2L360.7 367.7L360.6 367.1L360.7 365.9L360.8 364.7L361.5 362.0L360.9 361.3L358.4 359.7L356.8 359.3L354.2 359.3L349.2 359.7L348.4 360.0L346.5 359.6L348.0 357.9L348.2 356.2L348.2 352.5L346.0 354.0L346.0 354.4L341.1 354.4L341.1 355.9L342.6 358.2L342.6 359.1L339.2 359.1L338.0 361.3ZM465.3 204.3L461.1 204.8L457.7 200.3L452.5 200.0L450.2 197.3L448.3 191.8L443.9 184.9L442.6 180.7L442.1 175.2L438.4 169.5L439.5 165.0L437.7 162.3L440.3 154.0L444.2 151.9L445.2 148.6L445.7 143.0L442.9 145.3L441.4 146.8L439.1 147.5L435.8 145.3L435.7 140.0L436.7 136.0L439.2 136.0L444.4 137.6L440.0 132.8L437.7 130.4L435.0 131.2L433.0 129.1L435.8 121.1L434.3 117.5L432.2 111.6L429.0 101.6L425.7 97.6L425.7 93.5L418.6 87.1L413.1 86.0L406.1 87.1L399.8 87.1L396.7 83.8L392.3 77.0L399.0 73.5L404.3 72.3L393.3 69.9L387.3 64.9L387.6 59.8L397.5 53.2L407.1 46.3L408.2 41.1L401.1 36.0L403.4 29.8L412.4 18.3L416.3 16.6L415.1 7.7L421.2 4.0L429.3 0.2L437.4 0.2L440.3 5.9L447.0 -3.6L453.3 2.2L457.0 4.2L462.4 9.6L456.2 0.2L456.4 -7.6L465.3 -20.3L474.4 -20.3L477.8 -27.1L486.9 -29.4L507.8 -27.1L524.2 -9.7L519.3 -1.7L509.4 -1.7L495.3 0.2L496.6 4.0L505.7 2.2L513.8 7.7L518.8 2.2L520.9 9.6L518.0 19.2L524.8 13.1L537.3 5.9L545.1 9.6L546.7 16.6L536.0 28.2L534.6 32.2L526.3 34.5L532.3 36.0L529.2 46.3L527.1 55.2L527.1 69.9L530.2 77.0L526.3 78.2L521.9 81.6L526.9 87.1L527.4 96.1L524.5 96.6L527.9 105.5L522.2 106.5L525.3 110.2L524.2 113.0L520.6 114.8L516.9 114.8L520.3 121.1L520.3 124.5L515.1 121.1L513.8 123.7L517.5 125.4L520.9 130.4L521.8 136.8L517.2 138.4L515.1 135.2L512.0 131.2L512.8 136.4L509.6 140.7L516.7 140.7L520.3 141.5L513.3 147.5L506.3 153.3L498.4 156.1L495.6 156.1L492.9 158.9L489.3 165.6L483.7 170.2L482.0 170.8L478.3 172.1L474.7 173.4L472.3 177.7L472.3 181.9L471.0 185.5L466.9 190.1L467.9 194.6L466.6 199.0Z" fill="#303030"/><path d="M178.8 215.1L180.6 215.4L181.7 216.9L179.4 219.2L176.8 221.1L175.5 219.8L175.1 217.6L177.4 215.8ZM172.8 350.9L172.4 351.3L171.8 350.9L171.8 350.2L171.4 349.2L172.0 348.4L171.8 347.9L172.0 347.6L173.6 348.4L174.1 348.7L174.7 349.7L173.7 350.4ZM171.4 346.6L170.5 346.8L169.8 345.9L170.0 345.5L170.9 345.8L171.6 346.2ZM167.3 344.7L167.0 344.8L166.0 344.7L165.6 343.9L166.3 343.5L166.5 343.7ZM162.9 342.8L162.6 343.1L161.7 342.6L162.2 342.1L162.8 342.2Z" fill="#5ba0f3"/><path d="M256.4 256.6L255.1 257.0L250.6 255.4L250.0 253.8L247.6 252.6L247.2 251.4L244.4 250.6L243.6 248.5L243.6 247.3L246.5 248.1L248.0 248.9L250.5 249.3L251.4 250.6L252.7 252.6L255.3 254.2ZM232.4 233.4L234.9 233.1L234.1 238.1L236.3 241.5L235.3 241.5L233.7 239.5L232.8 237.6L231.5 236.2L231.0 234.3L231.1 232.8ZM432.2 247.7L430.3 251.4L432.2 250.0L433.7 251.0L433.0 252.2L435.3 253.4L436.3 252.2L439.0 253.6L438.2 256.6L440.0 255.8L440.3 257.7L441.2 260.5L440.0 263.5L439.0 263.9L437.1 263.1L437.8 260.1L437.1 259.5L434.0 262.8L432.4 262.8L434.3 260.8L431.8 260.1L429.0 260.1L423.8 260.1L423.6 258.9L425.1 257.5L424.1 256.6L426.2 254.2L428.8 247.7L430.6 245.2L432.7 244.0L434.0 244.0ZM410.2 251.1L411.1 250.7L414.5 251.7L417.2 253.4L417.3 254.1L416.0 254.2L412.6 253.0ZM411.5 262.2L412.5 264.1L414.3 264.6L416.8 264.5L415.5 266.1L414.5 266.3L411.2 264.7L410.6 263.4ZM352.7 116.1L354.8 121.7L357.2 114.5L363.8 110.7L368.3 120.0L367.9 125.7L373.0 123.2L375.5 119.8L381.3 124.2L384.9 128.2L385.2 131.8L390.1 129.9L392.8 135.1L399.1 138.2L401.4 141.3L403.8 148.3L399.0 151.7L405.2 156.3L409.3 157.9L413.1 164.1L417.2 164.6L416.4 169.2L411.8 176.5L408.6 173.8L404.5 167.7L401.1 168.5L400.8 172.2L403.5 175.8L407.1 178.6L408.1 180.3L409.8 186.1L408.9 190.3L405.6 188.7L399.1 184.0L402.8 189.1L405.5 192.5L405.9 194.4L398.8 192.2L393.3 188.9L390.1 186.1L391.0 184.4L387.1 181.4L383.3 178.4L383.3 180.2L375.8 181.2L373.6 179.1L375.3 174.6L380.2 174.4L385.6 173.7L384.7 171.4L385.6 168.2L389.0 161.8L388.3 158.7L387.3 156.3L383.3 153.0L378.0 150.5L379.7 148.6L376.9 144.0L374.6 143.6L372.5 141.0L371.2 143.2L366.4 144.2L357.0 142.5L351.4 140.3L347.2 139.1L345.0 136.4L347.7 132.7L344.0 132.7L343.2 124.2L345.2 116.4L347.9 112.7L354.6 110.2ZM280.7 116.5L279.4 120.6L285.2 117.9L288.8 122.4L291.8 117.9L294.2 120.8L296.3 129.1L297.6 125.6L295.8 116.7L298.1 115.4L300.7 116.8L303.6 120.5L305.2 128.7L306.0 134.5L310.4 138.4L315.1 142.1L314.8 145.4L310.5 146.0L312.2 148.8L311.3 151.5L306.6 150.4L302.1 148.4L299.1 148.8L294.2 151.3L287.6 152.4L283.0 153.0L281.5 149.6L278.0 147.7L275.7 148.5L272.4 142.6L274.2 141.7L278.2 140.4L281.9 140.8L285.3 139.4L280.2 137.6L274.7 138.2L271.0 138.1L269.6 135.2L275.7 131.9L271.6 132.0L267.1 129.9L269.3 123.6L271.1 120.1L278.0 114.8ZM264.3 131.4L257.4 135.2L256.1 131.7L250.0 127.3L251.2 123.8L253.0 117.4L255.2 111.4L252.7 105.6L261.5 104.0L265.2 106.1L271.9 106.6L274.4 109.3L277.2 113.2L273.9 115.6L267.5 121.8L264.3 127.7ZM399.8 -18.3L406.8 -16.6L412.4 -13.8L417.2 -8.3L417.1 -2.9L410.7 5.4L404.4 9.0L402.0 13.1L407.7 13.0L401.6 23.4L397.3 27.9L392.8 40.5L387.5 43.0L385.8 45.9L377.9 47.4L381.5 49.1L379.7 51.6L381.9 58.1L379.4 62.7L375.3 66.2L374.1 71.0L370.5 74.5L370.8 77.2L375.3 76.8L375.3 79.5L368.4 86.2L361.6 83.2L353.9 84.9L350.0 83.6L345.1 83.0L344.7 77.6L349.6 74.9L348.3 66.2L349.9 65.3L356.8 70.6L353.3 62.7L349.1 60.2L351.2 55.1L355.8 51.9L356.6 47.0L352.9 41.4L351.8 33.7L358.9 34.3L360.9 36.0L365.0 30.5L359.1 28.6L350.0 29.5L345.4 24.0L343.2 17.3L340.2 12.3L339.6 6.1L343.5 2.3L346.5 1.8L351.7 -1.3L355.5 -8.7L358.7 -7.6L361.5 -2.1L363.5 -13.0L367.0 -16.4L371.6 -18.8L379.6 -19.7L381.0 -17.3L388.5 -21.0L394.2 -19.7ZM370.3 99.4L368.6 102.0L364.7 104.1L361.4 103.0L353.9 104.4L348.6 104.6L344.4 103.4L337.4 100.2L336.5 94.6L336.2 89.5L333.6 84.7L328.2 83.4L325.2 79.9L326.1 75.1L331.5 75.8L334.4 79.5L339.6 79.5L341.8 83.2L341.2 87.4L344.2 89.8L345.9 92.3L349.4 92.7L353.2 93.7L357.3 91.4L362.7 90.5L366.9 91.3L369.7 95.1ZM334.3 98.8L332.9 102.7L329.1 101.9L326.0 99.3L327.3 94.7L331.1 91.9L333.4 95.5ZM351.5 42.6L354.7 47.1L351.1 51.3L346.3 61.3L341.7 62.2L336.2 60.6L333.5 55.2L333.5 50.3L335.5 46.6L330.8 46.7L327.9 41.8L326.3 35.1L328.1 28.2L329.9 23.2L332.5 22.0L331.4 18.2L337.5 17.3L340.8 26.3L345.2 29.7L349.5 32.6ZM296.3 86.0L297.3 89.8L299.6 88.1L302.3 88.5L302.8 93.7L301.2 98.5L292.4 100.1L285.8 104.3L281.8 104.6L281.5 101.4L286.9 97.0L275.1 98.2L271.5 96.4L275.0 86.0L277.5 82.9L284.8 86.7L289.5 93.0L294.0 93.8L290.3 83.5L292.7 79.4L295.4 80.7ZM316.7 109.9L319.9 111.8L324.5 110.6L325.2 113.3L322.8 117.6L326.7 121.4L326.2 129.1L321.9 132.3L319.4 131.5L317.6 128.4L311.1 121.9L311.2 119.1L316.5 120.1L313.7 114.3ZM335.4 119.6L332.6 126.1L329.6 125.7L328.0 118.1L328.1 113.6L329.4 109.7L332.0 107.1L337.4 107.4L342.4 109.7L338.5 117.8ZM356.4 172.4L356.8 175.1L358.2 174.2L359.7 175.8L362.6 177.9L365.6 179.8L365.8 182.7L367.7 182.2L369.6 184.1L367.3 186.0L363.2 184.6L361.7 181.9L359.1 185.1L355.4 188.1L354.5 184.7L351.0 185.2L353.3 182.3L353.6 177.6L354.5 171.8ZM321.6 80.2L323.6 85.3L323.7 91.0L322.5 98.6L318.2 99.6L315.4 98.0L315.4 92.0L311.1 92.8L311.0 84.5L313.8 84.8L317.7 81.0L321.4 81.7ZM275.4 69.3L275.1 78.4L273.0 82.4L270.6 82.9L265.8 87.6L261.6 89.3L258.1 86.9L262.5 78.6L267.9 71.0L271.8 71.1ZM333.7 70.8L332.5 71.2L327.7 70.4L327.0 67.1L332.2 67.2L334.1 69.5ZM291.1 68.7L286.2 72.2L282.4 68.3L284.5 64.3L288.3 63.0L292.0 65.1ZM292.5 57.2L289.3 59.7L285.0 59.7L285.0 57.9L287.7 53.9L289.1 54.6ZM328.5 64.2L324.7 66.8L322.6 63.9L321.5 59.1L321.2 53.6L324.6 54.2L326.1 55.0L329.3 59.6ZM317.5 60.9L318.5 66.1L314.3 64.7L310.0 60.6L304.2 60.1L306.7 56.2L303.5 52.9L303.4 47.7L308.5 49.5L315.5 54.6ZM329.0 148.9L327.4 151.4L323.9 149.3L321.8 150.1L318.2 146.8L320.5 144.5L322.3 141.2L325.1 143.3L326.6 144.7L327.4 146.1Z" fill="#1f2c47"/><path d="M540.7 167.3L540.2 171.5L543.0 175.9L539.6 180.1L532.1 184.3L529.9 185.5L526.4 184.7L519.1 182.8L521.6 180.1L516.0 177.1L520.6 175.9L520.6 174.0L515.1 172.7L516.8 168.5L520.9 167.6L524.8 172.1L528.8 168.2L532.1 170.2L536.2 166.9ZM418.9 560.3L422.0 557.8L424.2 558.8L425.8 557.2L427.9 559.0L427.1 560.5L423.6 561.8L422.4 560.3L420.2 562.2ZM399.5 563.7L400.5 565.6L401.8 568.9L405.2 571.6L408.8 572.7L407.7 575.0L405.2 575.2L403.8 573.6L402.3 573.5L399.5 573.5L398.0 576.4L396.0 575.0L393.3 574.3L390.0 571.8L387.3 569.4L383.8 564.5L385.9 565.4L389.6 568.4L393.0 569.9L394.4 567.9L395.2 564.9L397.6 563.1ZM363.9 339.4L366.2 339.6L368.2 339.6L370.7 340.6L371.7 341.6L374.1 341.3L375.1 342.0L377.3 343.7L378.9 345.0L379.8 344.9L381.3 345.5L381.1 346.3L383.1 346.4L385.0 347.6L384.7 348.2L383.0 348.6L381.2 348.7L379.4 348.5L375.7 348.7L377.4 347.2L376.4 346.5L374.7 346.3L373.8 345.5L373.2 343.9L371.7 344.0L369.3 343.2L368.5 342.6L365.1 342.2L364.2 341.7L365.1 341.0L362.6 340.8L360.7 342.3L359.6 342.3L359.3 343.0L358.0 343.3L356.9 343.0L358.2 342.2L358.8 341.1L360.0 340.5L361.3 340.0L363.3 339.7ZM391.5 349.1L391.8 348.7L393.8 348.7L395.4 349.4L396.0 349.3L396.5 350.3L398.0 350.3L397.9 351.1L399.0 351.2L400.3 352.2L399.3 353.3L398.1 352.7L396.9 352.8L396.0 352.7L395.6 353.2L394.6 353.4L394.2 352.7L393.3 353.1L392.3 355.0L391.6 354.5L391.5 353.8L389.7 353.3L388.5 353.4L386.9 353.3L385.7 353.8L384.3 352.9L384.5 352.0L386.9 352.4L388.9 352.6L389.8 352.0L388.6 350.8L388.7 349.8L387.0 349.3L387.6 348.6L389.2 348.7ZM376.2 352.5L377.9 352.8L379.3 353.4L379.7 354.2L377.9 354.2L377.1 354.6L375.7 354.2L374.2 353.2L374.5 352.6L375.6 352.4ZM405.6 352.5L407.0 352.7L407.4 353.2L406.7 353.9L404.8 353.9L403.3 354.0L403.1 352.8L403.5 352.4ZM417.6 373.4L419.1 373.0L419.7 373.1L419.6 375.1L417.4 375.4L416.9 375.1L417.7 374.4ZM374.6 333.6L375.3 333.7L376.3 336.1L376.3 337.8L375.6 337.9L375.0 336.3L374.0 335.4ZM372.5 329.0L373.7 328.8L375.4 328.9L375.5 329.6L372.7 330.1ZM375.6 328.3L377.7 329.6L377.2 331.7L376.7 331.3L376.8 329.8L375.6 328.6ZM707.7 434.4L708.4 435.5L709.1 437.3L709.5 440.5L710.2 441.8L709.9 443.1L709.4 443.9L708.5 442.3L708.1 443.1L708.5 445.1L708.3 446.3L707.6 446.9L707.5 449.2L706.4 452.4L705.1 456.2L703.5 461.5L702.5 465.5L701.4 468.8L699.2 469.5L696.9 470.7L695.4 470.0L693.4 469.0L692.6 467.4L692.5 464.9L691.6 462.6L691.3 460.6L691.8 458.6L693.0 458.1L693.0 457.2L694.2 455.1L694.5 453.3L693.9 452.0L693.4 450.2L693.2 447.7L694.1 446.2L694.4 444.5L695.7 444.4L697.2 443.8L698.1 443.3L699.3 443.3L700.8 441.7L702.9 440.1L703.7 438.7L703.4 437.6L704.5 437.9L705.9 436.0L705.9 434.4L706.8 433.2ZM560.8 241.2L556.2 243.7L552.5 243.0L554.6 238.6L553.2 234.1L556.8 230.7L558.8 228.5L560.9 228.3L563.7 231.1L562.3 234.2L562.8 237.3Z" fill="#303030"/><path d="M603.4 280.2L602.6 282.8L601.4 282.1L600.8 279.8L601.3 278.5L603.0 277.1Z" fill="#21345a"/><path d="M619.0 293.5L618.0 296.2L618.4 297.2L617.9 298.8L615.9 297.6L614.6 297.3L610.9 295.6L611.3 293.9L614.3 294.2L617.0 293.8ZM602.5 283.4L604.1 285.9L603.7 290.4L602.5 290.2L601.5 291.3L600.5 290.4L600.4 286.3L599.8 284.3L601.2 284.5Z" fill="#161f36"/><path d="M948.6 290.4L946.2 293.7L946.2 297.1L945.2 299.7L945.7 301.4L944.3 303.6L941.0 305.1L936.4 305.3L932.7 308.9L930.9 307.7L930.8 305.3L926.3 306.0L923.2 307.5L920.2 307.6L919.9 306.5L922.5 304.8L924.4 302.7L929.6 301.7L932.4 302.3L935.1 296.6L936.9 298.1L940.7 294.9L942.2 293.6L943.8 289.5L943.3 285.7L944.5 283.5L947.2 282.8L948.6 287.6ZM920.2 307.6L922.5 309.7L921.0 315.1L919.4 316.4L918.1 315.2L918.8 312.4L917.1 311.5L916.0 309.4L918.5 308.5ZM929.7 306.7L930.0 307.8L928.5 309.7L927.5 308.7L926.1 309.4L925.4 311.3L923.7 310.4L923.8 308.9L925.2 307.0L926.7 307.4L927.8 306.1ZM953.9 272.9L955.7 273.7L957.5 272.2L958.1 276.2L954.3 277.2L952.0 280.7L947.9 278.3L946.5 282.1L943.6 282.2L943.2 278.7L944.5 276.0L947.3 275.7L948.0 270.7L948.8 267.8L951.9 271.7Z" fill="#1c2b4c"/><path d="M953.2 247.5L955.8 254.7L951.9 253.3L950.3 259.1L952.9 263.0L952.8 265.6L950.8 263.4L949.1 266.3L948.6 263.1L948.9 259.4L948.6 255.1L949.2 252.1L949.3 246.7L947.8 242.5L948.0 236.7L950.5 234.7L949.4 232.6L950.6 232.0L951.3 234.9L952.2 239.1L952.1 243.3ZM896.1 336.0L894.6 340.5L893.5 342.8L892.1 340.5L891.8 338.3L893.3 335.5L895.4 333.4L896.6 334.2ZM866.3 352.0L864.1 353.3L861.9 352.5L861.8 350.1L863.1 348.8L866.0 348.1L867.5 348.1L868.0 349.2L866.9 350.4ZM791.8 381.9L791.4 384.7L790.3 385.4L788.1 386.0L786.8 383.9L786.4 380.1L787.6 375.9L789.4 377.3L790.6 379.2Z" fill="#303030"/><path d="M950.2 429.6L951.9 434.0L952.9 437.8L953.9 440.0L955.6 438.9L957.7 441.1L957.4 442.3L958.0 444.7L959.7 448.7L959.5 450.1L963.1 453.4L966.7 455.9L966.4 456.6L967.9 458.4L968.9 461.4L970.0 460.8L971.0 462.0L971.6 461.6L972.1 464.6L975.1 467.4L977.2 469.8L977.9 472.1L978.0 473.7L977.8 475.5L979.1 478.0L978.9 480.7L977.8 484.7L977.8 486.5L977.3 488.7L976.1 491.5L974.2 493.0L973.2 495.4L972.4 497.0L971.6 499.7L970.6 501.3L970.0 503.7L969.6 506.0L969.7 507.0L968.2 508.1L965.3 508.3L962.9 509.6L961.7 510.9L960.1 512.4L958.0 510.9L956.4 510.3L956.8 508.6L955.4 509.2L953.1 511.6L950.8 510.7L949.3 510.2L947.9 509.9L945.3 509.0L943.6 506.9L943.2 504.4L942.5 501.5L941.3 501.5L938.8 501.1L939.6 499.6L939.0 497.2L937.7 499.4L935.4 500.0L936.8 498.2L937.1 496.4L938.2 494.9L937.9 492.6L935.8 495.2L934.2 496.3L933.2 498.8L931.2 497.5L931.2 495.8L929.6 493.6L928.2 492.4L928.7 491.7L925.4 489.8L923.6 489.7L921.0 488.2L916.4 488.5L913.0 490.5L910.0 490.6L907.5 490.5L904.8 492.0L902.5 492.7L902.0 494.4L901.0 495.6L898.8 495.7L897.2 496.0L894.9 495.4L893.0 495.8L891.2 495.9L889.7 497.6L888.9 497.4L887.6 498.4L886.3 499.4L884.5 499.3L882.7 499.3L879.9 497.2L878.5 496.6L878.6 494.8L879.9 494.4L880.3 493.7L880.2 492.6L880.5 490.4L880.3 488.6L878.9 485.5L878.4 483.8L878.6 482.1L877.5 480.1L877.5 479.3L876.3 478.1L876.0 475.8L874.5 473.4L874.1 472.2L875.3 473.5L874.4 470.8L875.7 471.6L876.4 472.7L876.4 471.3L875.1 469.0L874.9 468.1L874.3 467.2L874.5 465.6L875.1 464.9L875.4 463.4L875.2 461.8L876.2 459.8L876.4 461.9L877.5 460.0L879.7 459.0L880.9 457.8L882.9 456.8L884.1 456.6L884.8 456.9L886.9 455.9L888.5 455.6L888.9 455.0L889.5 454.7L891.0 454.8L893.7 454.0L895.1 452.8L895.8 451.3L897.3 449.9L897.5 448.8L897.5 447.3L899.3 445.0L900.4 447.3L901.6 446.8L900.6 445.5L901.5 444.2L902.6 444.8L902.9 442.7L904.4 441.4L905.0 440.3L906.3 439.9L906.3 439.1L907.5 439.4L907.5 438.8L908.7 438.3L909.9 438.0L911.8 439.2L913.3 440.8L914.9 440.9L916.6 441.1L916.0 439.6L917.3 437.5L918.5 436.8L918.0 436.1L919.2 434.6L920.8 433.6L922.1 433.9L924.3 433.4L924.3 432.1L922.3 431.2L923.7 430.8L925.5 431.5L926.8 432.6L929.0 433.2L929.8 433.0L931.4 433.8L932.9 433.0L933.9 433.3L934.5 432.8L935.7 434.1L935.0 435.5L934.0 436.6L933.1 436.7L933.4 437.7L932.7 439.1L931.7 440.4L931.9 441.2L934.0 442.7L936.0 443.5L937.3 444.5L939.2 446.1L940.0 446.1L941.3 446.8L941.7 447.6L944.2 448.5L946.0 447.6L946.5 446.1L947.0 444.9L947.3 443.5L948.1 441.3L947.7 440.0L947.9 439.2L947.6 437.7L948.0 435.6L948.5 435.1L948.1 434.2L948.7 432.8L949.2 431.3L949.2 430.6ZM957.7 518.3L960.3 519.5L961.7 519.0L963.7 518.4L965.3 518.6L965.5 522.7L964.6 524.0L964.3 526.8L963.4 525.8L961.6 528.3L961.0 528.1L959.4 528.0L957.8 525.0L957.5 522.6L956.0 519.6L956.0 518.0Z" fill="#19253f"/><path d="M1039.9 515.8L1038.9 517.7L1037.6 520.0L1035.6 521.4L1035.1 520.5L1034.0 520.0L1035.6 517.2L1034.7 515.3L1031.9 513.9L1032.0 512.7L1033.8 511.6L1034.3 509.0L1034.2 506.9L1033.1 504.7L1033.2 504.1L1031.9 502.8L1029.9 499.9L1028.8 497.7L1029.8 497.4L1031.2 499.2L1033.2 500.0L1033.9 502.9L1035.8 506.3L1035.9 504.1L1037.1 505.0L1037.5 507.4L1039.5 508.5L1041.3 508.8L1042.8 507.5L1044.1 507.9L1043.5 510.8L1042.7 512.8L1040.7 512.7L1040.0 513.7L1040.2 515.2ZM1021.1 528.1L1023.3 526.2L1024.9 524.3L1026.0 521.7L1027.0 520.8L1027.4 518.9L1029.2 517.3L1029.8 518.8L1030.4 520.2L1032.2 518.8L1033.0 520.3L1033.0 521.7L1032.0 523.3L1030.3 526.0L1029.0 527.4L1029.9 529.1L1027.9 529.2L1025.7 530.5L1025.0 532.9L1023.5 536.7L1021.5 538.4L1020.2 539.5L1017.8 539.4L1016.1 538.1L1013.3 537.9L1012.8 536.5L1014.2 533.7L1017.5 530.1L1019.2 529.4ZM827.0 387.3L832.8 387.9L835.1 390.5L837.1 392.2L838.5 393.3L841.0 396.1L843.7 396.2L845.9 397.9L847.4 400.1L849.3 401.3L848.3 403.5L849.8 404.4L850.7 404.4L851.2 406.2L852.1 407.7L854.0 407.9L855.3 409.6L854.6 412.9L854.5 416.9L851.6 416.9L849.4 414.8L846.1 412.6L845.0 411.0L843.0 408.9L841.7 406.9L839.7 403.3L837.4 401.1L836.6 398.9L835.7 396.9L833.3 395.2L832.0 393.0L830.0 391.5L827.3 388.6ZM855.1 417.0L858.3 417.1L860.4 418.2L861.5 418.4L861.8 419.3L866.8 419.6L867.4 418.5L872.2 419.8L873.2 421.5L877.1 422.0L880.3 423.5L877.3 424.5L874.4 423.5L872.1 423.5L869.4 423.3L867.0 422.8L863.9 421.8L862.0 421.6L860.9 421.9L856.2 420.8L855.7 419.7L853.3 419.5ZM864.5 396.4L866.5 397.3L868.5 396.8L869.0 394.6L870.1 394.1L873.2 393.5L875.1 391.4L876.4 389.8L877.4 388.8L879.6 387.4L881.6 385.6L883.0 383.5L884.0 383.5L885.3 384.8L885.5 385.9L887.2 386.7L889.4 387.5L889.2 388.5L887.4 388.6L887.9 389.9L886.0 390.8L886.0 396.8L888.8 399.3L885.8 399.6L884.9 401.3L885.0 403.7L882.5 405.5L882.4 408.1L881.5 412.1L881.1 411.2L878.1 412.3L877.1 410.7L875.2 410.6L873.9 409.7L870.8 410.7L869.8 409.4L868.2 409.6L866.0 409.2L865.6 405.7L864.3 405.0L863.0 402.8L862.7 400.5L863.0 398.1ZM893.8 398.2L895.9 399.0L899.1 399.3L902.1 399.2L904.7 397.3L905.2 397.9L903.1 400.5L901.1 401.0L898.6 400.5L894.3 400.6L892.0 401.0L891.6 403.0L893.9 405.3L895.4 404.1L900.2 403.2L900.0 404.4L898.9 404.0L897.7 405.6L895.4 406.6L897.9 409.9L897.4 410.8L899.8 413.8L899.7 415.5L898.4 416.3L897.3 415.4L898.6 413.2L896.0 414.3L895.4 413.5L895.7 412.5L893.8 411.0L894.0 408.5L892.3 409.2L892.5 412.3L892.6 416.0L891.0 416.4L889.9 415.7L890.6 413.2L890.2 410.7L889.1 410.7L888.3 408.9L889.4 407.2L889.7 405.1L891.1 401.2L891.6 400.1ZM928.4 404.6L929.1 408.8L931.8 410.4L934.0 407.6L937.0 406.0L939.3 406.0L941.5 406.9L943.5 407.9L946.3 408.4L950.8 410.2L955.6 411.7L957.4 413.0L958.9 414.3L959.3 415.9L963.6 417.5L964.2 418.9L961.8 419.2L962.4 420.9L964.7 422.6L966.4 425.4L967.9 425.4L967.8 426.5L969.8 427.0L969.1 427.5L971.8 428.6L971.5 429.4L969.8 429.5L969.2 428.8L966.9 428.6L964.3 428.2L962.3 426.5L960.8 425.0L959.4 422.7L956.0 421.6L953.8 422.3L952.2 423.2L952.6 425.1L950.5 426.0L949.1 425.6L946.3 425.5L944.0 423.3L941.4 422.8L940.7 423.5L937.4 423.6L938.5 421.5L940.2 420.7L939.5 417.9L938.3 415.7L933.2 413.5L931.0 413.2L927.1 410.8L926.4 412.1L925.4 412.3L924.8 411.4L924.8 410.2L922.8 409.0L925.6 408.0L927.4 408.1L927.2 407.4L923.4 407.4L922.4 405.8L920.0 405.3L918.9 404.1L922.5 403.4L923.8 402.6L928.0 403.6ZM894.9 352.5L896.6 353.3L897.4 352.5L897.6 353.3L897.2 354.4L898.1 356.3L897.4 358.6L895.8 359.5L895.4 361.7L896.0 363.8L897.4 364.1L898.5 363.8L901.8 365.3L901.6 366.8L902.4 367.4L902.1 368.6L900.1 367.3L899.1 365.9L898.5 366.9L896.8 365.3L894.4 365.7L893.1 365.1L893.3 364.0L894.1 363.3L893.3 362.7L893.0 363.6L891.7 362.1L891.3 360.9L891.2 358.3L892.3 359.2L892.5 355.0L893.4 352.5ZM908.1 379.6L908.4 381.3L908.6 382.8L907.7 385.2L906.7 382.5L905.5 383.8L906.3 385.8L905.6 387.0L902.5 385.5L901.8 383.6L902.6 382.4L900.9 381.1L900.1 382.2L898.9 382.1L896.9 383.6L896.5 382.8L897.5 380.6L899.2 379.8L900.6 378.8L901.5 380.0L903.5 379.3L903.9 378.1L905.8 378.1L905.6 376.0L907.7 377.3L908.0 378.6ZM902.6 368.6L905.1 368.6L905.8 369.6L906.6 372.6L904.6 371.9L904.6 372.8L905.3 374.4L904.0 375.0L903.9 373.2L903.1 373.0L902.7 371.4L904.3 371.6L904.2 370.6L902.6 368.6ZM899.6 371.2L899.6 372.3L898.4 373.4L896.7 374.2L896.6 373.0L896.8 371.6L896.4 370.4L898.0 371.2ZM901.9 374.6L900.9 375.5L900.1 377.2L899.3 378.0L897.7 376.2L898.3 375.4L898.9 374.7L899.2 373.1L900.6 372.9L900.2 374.7L902.1 372.1L901.9 374.6ZM890.2 371.7L890.7 373.9L889.0 375.4L887.6 377.2L884.1 379.7L885.4 377.8L887.3 376.2L888.9 374.4ZM894.8 366.3L895.5 367.2L894.8 369.5L893.7 368.2L892.3 366.1ZM904.5 424.9L904.8 424.3L907.0 423.7L908.8 423.6L909.6 423.2L910.6 423.6L909.7 424.3L907.0 425.5L904.8 426.2L903.1 428.2L900.8 428.8L900.5 428.5L900.8 427.6L901.9 425.9ZM887.0 423.5L888.6 423.3L889.2 424.4L886.2 424.9L884.4 425.3L883.0 425.3L883.9 423.7L885.3 423.7L886.0 422.8ZM891.3 424.7L893.4 423.2L895.0 424.0L896.7 423.7L899.1 422.8L898.7 424.2L894.8 425.0L891.3 424.7ZM892.6 426.9L893.5 427.7L893.4 428.5L892.3 428.5L888.8 426.7L891.2 426.1ZM914.2 398.7L914.0 400.9L912.7 400.7L912.3 402.3L913.4 403.6L912.6 403.9L911.6 402.3L910.8 399.0L911.3 396.9L912.2 395.9L912.4 397.3L913.9 397.6ZM915.9 408.9L918.8 409.7L919.7 411.7L917.6 410.6L915.4 410.4L913.9 410.6L912.1 410.4L912.7 409.0ZM909.8 409.8L910.4 410.6L909.4 411.5L907.6 411.0L907.1 409.9ZM975.3 412.4L975.8 412.9L975.8 414.3L974.9 415.9L973.6 416.1L973.1 416.9L971.7 417.5L970.4 418.1L969.0 418.1L966.8 417.4L965.4 416.6L965.6 415.8L967.9 416.2L969.4 416.0L970.1 414.7L970.4 416.0L971.9 415.9L972.6 414.9L974.0 414.0L973.8 412.5ZM977.9 413.3L977.1 414.1L976.6 412.5L976.0 411.5L974.8 410.6L973.3 409.5L971.5 408.7L972.2 408.1L973.6 408.9L974.5 409.4L975.6 410.1L976.6 411.2L977.6 412.0ZM982.2 415.5L982.9 416.2L984.2 417.8L985.4 418.7L985.1 419.4L984.4 419.7L983.2 418.7L982.1 417.0L981.5 415.0L981.9 414.8ZM994.9 422.6L995.5 423.4L995.6 424.0L993.6 422.8L992.2 421.9L991.2 421.0L991.6 420.7L992.8 421.4ZM998.0 427.5L997.0 427.6L995.4 427.3L994.9 426.9L995.0 425.8L996.8 426.2L997.6 426.8ZM1010.9 457.9L1013.0 459.6L1014.4 460.9L1013.4 461.6L1012.0 460.8L1010.1 459.5L1008.4 458.1L1006.7 456.1L1006.3 455.2L1007.5 455.2L1008.9 456.1L1010.1 457.1ZM1043.7 447.5L1044.7 448.3L1044.2 449.8L1042.6 450.1L1041.2 449.8L1040.9 448.6L1041.9 447.6ZM1014.7 443.6L1016.3 445.2L1015.4 445.5L1014.6 444.3ZM618.0 42.4L619.0 37.2L622.8 36.8L626.1 42.0L634.7 52.4L628.1 57.7L626.7 67.1L624.4 69.4L623.2 79.2L620.0 79.6L614.4 72.5L616.8 68.2L612.9 64.7L607.8 53.6L605.7 42.7L612.9 37.4L614.3 42.6ZM650.0 36.6L646.1 44.6L638.5 46.3L630.9 43.9L630.4 39.9L626.6 39.6L623.8 32.6L631.9 28.2L635.6 32.0L638.3 27.3L644.9 31.2ZM643.0 66.8L637.2 71.8L632.6 68.9L634.4 65.7L632.8 61.8L638.2 59.2L639.2 63.9ZM711.9 29.0L708.4 31.1L706.0 32.3L705.7 34.8L702.6 37.4L699.8 33.7L701.3 28.9L695.5 28.4L700.6 25.5L704.5 25.3L705.1 29.7L706.6 25.8L709.0 23.0L712.9 26.6ZM712.7 126.1L715.4 124.3L715.3 119.6L720.5 111.8L718.1 110.7L724.3 102.3L723.6 97.8L729.4 92.3L738.0 85.5L746.7 83.4L751.2 79.2L756.3 77.7L758.1 82.2L756.3 85.7L747.1 91.0L739.1 96.0L731.0 105.4L727.1 114.6L723.1 123.1L723.6 130.1L728.6 136.7L727.0 137.4L718.5 136.4L717.8 132.8L713.1 130.6ZM839.2 53.5L833.5 55.1L826.2 51.3L821.9 45.9L819.9 35.4L816.3 32.3L823.1 21.4L828.7 17.5L833.8 25.8L839.8 40.8ZM852.6 61.0L837.9 65.9L842.6 48.7L844.8 47.0L846.7 48.0L853.3 55.8ZM940.6 86.7L947.5 87.2L956.9 92.8L954.9 100.4L945.3 100.1L940.9 102.5L935.8 96.0L937.2 88.7ZM960.3 93.5L965.1 95.0L971.6 97.8L968.6 101.7L964.5 100.8L959.6 96.9ZM949.0 109.7L943.8 114.7L943.3 114.2L945.8 110.5ZM1048.0 130.2L1044.7 133.6L1045.1 136.2L1048.0 135.8ZM109.0 130.2L115.3 132.3L115.1 133.4L112.4 135.3L109.0 135.8ZM109.0 150.0L115.4 155.4L122.2 162.2L122.0 166.4L123.8 168.0L123.2 163.2L130.2 164.2L135.3 170.3L132.8 173.1L128.5 173.7L128.4 179.8L127.4 181.0L124.9 180.9L123.0 178.7L119.5 177.0L118.9 174.2L116.3 173.2L113.3 174.1L111.9 171.8L112.4 169.5L109.3 171.0L110.5 174.0L109.0 176.6ZM427.7 616.6L429.3 617.7L428.3 620.1L425.7 621.9L424.6 623.1L422.5 621.9L420.4 622.5L416.8 625.5L415.5 627.3L415.2 629.8L415.2 632.4L416.5 634.3L414.7 635.6L412.4 636.3L410.8 638.2L409.2 640.9L407.7 643.6L407.7 704.6L399.8 704.6L402.2 644.3L403.0 638.9L404.8 636.9L407.9 632.4L410.0 630.5L411.0 628.0L412.6 626.1L414.2 624.3L416.8 624.3L418.4 622.5L420.2 621.3L422.3 620.4L424.1 618.9L425.7 617.1ZM695.9 704.6L695.9 643.6L703.7 639.6L708.9 640.2L713.6 634.3L718.3 632.4L723.0 632.4L725.6 633.0L727.7 634.3L728.0 637.6L731.6 641.6L734.7 642.2L738.6 646.4L741.3 646.4L743.3 645.0L745.7 642.2L748.0 643.6L753.0 645.7L755.6 645.7L758.2 645.7L760.3 653.5L780.9 657.2L782.2 654.2L784.8 648.5L789.5 645.7L791.1 642.9L792.6 642.2L794.5 640.9L797.1 641.6L802.0 640.2L804.9 640.9L806.7 638.9L808.0 634.3L809.1 636.3L810.1 639.2L812.5 640.6L814.8 640.9L817.4 640.2L820.0 640.9L822.4 640.9L824.2 640.2L826.3 640.9L828.4 642.2L830.7 641.2L833.6 641.2L835.9 640.2L838.5 641.2L840.4 638.9L841.7 636.9L843.5 635.0L846.6 630.5L848.5 631.1L850.3 633.0L852.1 635.0L855.5 638.9L860.5 639.6L863.3 638.2L865.9 637.6L868.3 635.6L869.8 633.7L873.0 633.7L874.8 632.4L876.9 633.7L878.2 635.6L880.0 637.6L882.9 637.6L884.7 638.9L887.8 640.9L891.0 641.6L893.8 640.9L897.5 636.9L899.8 636.3L902.2 636.9L905.1 637.6L907.4 636.9L909.8 636.9L914.4 638.2L917.6 635.6L919.7 635.6L922.3 635.6L925.1 635.6L927.8 635.0L930.1 634.3L930.6 631.1L930.9 628.6L932.4 630.5L933.0 633.0L933.8 635.6L934.8 638.2L937.1 639.2L940.0 638.9L943.4 638.9L945.7 638.2L949.1 638.2L951.7 638.2L955.1 638.2L958.0 638.9L959.8 640.9L959.3 643.6L960.9 645.7L963.7 647.1L966.6 649.2L970.0 650.6L970.0 704.6ZM663.9 303.6L664.1 303.6L664.4 302.8L666.3 302.9L668.7 301.9L666.9 303.2L667.1 303.8L667.2 304.1L664.5 305.4L663.2 305.0L662.6 303.7ZM640.3 301.8L641.8 302.9L643.8 302.7L645.7 302.9L645.7 303.5L647.1 303.1L646.7 304.0L643.0 304.3L643.0 303.8L639.8 303.1ZM611.6 226.3L610.0 230.0L607.3 227.5L606.9 225.5L610.8 224.0Z" fill="#303030"/><path d="M625.7 218.3L627.8 215.4L628.8 215.2L627.5 217.6L626.2 220.0Z" fill="#131a2b"/><path d="M757.7 551.7L758.3 547.2L760.0 548.4L762.5 548.9L762.5 549.7L761.8 551.5L757.8 551.7Z" fill="#303030"/><path d="M654.1 283.1L654.8 283.4L659.7 283.8L662.9 281.6L665.9 280.6L670.2 280.5L674.8 283.0L678.5 284.3L681.6 283.8L683.8 284.1L686.9 282.3L687.3 280.8L686.6 278.4L685.1 277.1L683.7 276.7L682.7 275.6L679.4 272.5L676.4 271.1L674.2 269.0L676.1 268.4L678.2 265.3L676.8 263.7L680.6 262.2L680.5 261.4L678.2 262.0L676.1 262.3L674.4 263.5L671.9 263.7L669.7 265.1L669.8 267.5L671.1 268.4L673.8 268.1L673.3 269.5L670.4 270.1L666.9 272.2L665.4 271.5L666.0 269.8L663.1 268.7L663.6 268.0L666.1 266.7L665.4 265.9L661.3 264.9L661.1 263.5L658.7 264.0L657.7 266.1L655.7 268.8L655.8 269.7L654.5 270.6L653.7 270.2L653.0 274.6L651.6 276.1L650.7 278.6L651.5 280.6L651.8 282.0ZM700.3 271.3L702.9 267.5L705.4 266.9L706.6 264.7L709.0 263.9L712.0 262.2L714.2 263.1L716.8 262.9L717.3 265.3L716.8 268.9L714.6 268.4L712.4 269.0L712.3 271.7L709.7 271.3L709.8 272.5L711.2 273.4L712.4 276.7L715.4 277.9L715.9 279.1L715.3 280.6L715.4 281.4L716.6 281.1L718.6 280.3L719.4 282.3L719.0 285.4L716.5 284.6L715.9 287.5L717.7 287.7L717.0 290.0L719.0 291.1L718.7 294.6L719.1 296.9L718.9 297.7L714.8 298.6L711.1 298.0L709.3 296.4L706.8 295.7L706.0 293.2L705.9 291.6L706.9 290.8L707.4 289.6L707.8 287.0L709.9 286.7L709.1 285.8L707.9 285.6L706.6 283.2L705.2 281.3L703.7 278.9L702.4 277.2L702.6 274.8L701.1 272.5Z" fill="#141414"/><path d="M443.8 390.7L444.7 390.6L446.8 396.6L448.2 397.1L446.3 401.1L447.0 401.8L451.7 402.2L451.7 404.8L453.8 403.1L457.0 404.1L461.4 405.6L462.7 407.2L462.2 408.6L465.3 407.8L470.3 409.2L474.2 409.1L478.1 411.3L481.5 414.1L483.4 414.9L485.6 415.1L486.7 415.9L487.5 419.2L487.9 420.8L486.9 425.2L485.6 426.9L482.0 430.5L480.2 433.6L478.3 435.9L477.6 436.0L476.9 437.9L477.0 443.0L476.4 447.2L476.1 449.0L475.2 450.1L474.8 453.7L472.2 457.4L471.7 460.3L469.6 461.5L469.0 463.2L466.2 463.2L462.0 464.3L460.2 465.5L457.3 466.4L454.2 468.7L452.0 471.5L451.6 473.7L452.1 475.3L451.6 478.3L451.0 479.7L449.2 481.3L446.3 486.7L444.0 489.1L442.2 490.5L441.0 493.5L439.3 495.3L439.7 492.0L438.2 489.9L436.2 488.2L433.5 486.3L432.5 486.4L429.9 484.0L428.2 484.4L431.7 480.2L434.6 477.4L436.4 476.2L438.6 474.5L438.6 472.2L437.3 470.6L436.0 471.1L436.5 469.4L436.9 467.7L436.9 466.2L436.0 465.7L435.0 466.1L434.0 466.1L433.7 464.9L433.5 462.3L433.0 461.5L431.2 460.7L430.1 461.2L427.4 460.7L427.6 456.9L426.8 455.4L427.6 454.8L427.3 453.2L428.1 452.0L428.5 449.8L427.9 448.1L426.5 447.3L426.2 446.3L426.6 444.7L421.6 444.6L420.6 441.4L421.3 441.4L421.3 440.2L420.8 439.4L420.7 437.9L419.2 437.1L417.5 437.1L416.4 436.3L414.7 435.8L413.7 434.8L410.7 434.4L407.9 432.0L408.1 430.2L407.8 429.2L408.1 427.2L404.7 427.6L401.0 429.7L399.4 430.5L397.1 430.3L395.7 430.8L394.5 430.5L394.7 426.5L392.5 428.0L390.2 427.9L389.2 426.5L387.5 426.4L388.0 425.3L386.6 423.6L385.5 421.3L386.2 420.8L386.2 419.7L387.8 418.9L387.6 417.5L388.1 416.6L388.4 415.4L393.8 412.7L396.2 412.8L397.4 404.5L397.0 403.0L395.9 402.1L395.9 400.2L397.4 399.7L398.0 399.0L396.4 398.8L396.4 397.2L401.5 397.2L403.1 397.1L403.6 398.7L404.1 398.3L405.6 399.7L408.0 398.7L410.8 397.7L411.3 396.6L413.1 395.3L410.5 393.5L411.0 391.7L410.0 390.8L411.6 390.9L414.7 391.2L418.4 389.9L420.2 388.0L421.5 387.9L422.0 388.5L421.7 389.6L422.5 390.1L423.3 391.3L422.1 394.4L422.9 396.9L424.6 398.2L425.9 398.2L429.0 396.6L432.4 396.9L436.3 395.6L440.5 396.1Z" fill="#18223a"/><path d="M437.8 386.6L440.6 387.5L443.3 389.7L443.8 390.7L442.2 393.1L441.4 395.1L440.4 396.1L439.2 396.3L438.8 395.5L438.2 395.4L437.4 396.1L436.3 395.6L436.9 394.5L437.2 393.3L437.6 392.2L436.6 390.6L436.4 388.8Z" fill="#21345a"/><path d="M325.1 331.7L320.0 330.2L319.0 327.0L317.7 324.9L314.0 320.1L311.1 320.1L309.6 322.5L305.9 320.7L304.9 317.7L300.7 314.0L296.3 314.0L296.3 315.6L289.0 315.6L279.1 311.9L279.3 311.3L273.0 311.8L274.1 314.5L276.0 317.0L277.2 320.8L280.7 323.8L280.6 325.1L278.4 326.3L279.9 328.0L282.6 329.1L285.6 331.3L285.9 335.0L289.1 337.1L291.1 340.4L292.0 340.4L293.1 338.9L291.1 336.3L289.7 334.7L288.2 332.1L285.8 327.9L284.4 326.1L283.4 324.3L282.2 322.3L280.6 320.3L279.1 316.8L279.1 314.0L278.7 315.3L283.4 316.0L283.9 318.7L285.7 321.7L287.4 324.1L289.9 325.9L292.1 329.4L293.4 330.1L293.0 331.9L295.8 333.7L297.0 335.5L301.9 340.6L303.9 344.4L303.1 347.1L304.7 350.2L308.5 353.1L312.5 354.1L315.1 356.0L318.5 357.4L322.9 359.0L326.6 360.3L331.5 358.8L335.0 360.3L337.9 363.3L338.0 361.3L339.2 359.1L342.6 359.1L342.6 358.2L341.1 355.9L341.1 354.4L346.0 354.4L346.0 354.0L348.2 352.5L349.2 353.1L350.4 349.8L351.4 344.0L347.6 344.2L343.0 345.6L342.4 348.7L340.1 351.4L336.5 352.4L332.2 353.5L328.4 351.6L325.0 346.6L323.2 341.5L323.7 336.3Z" fill="#1a2438"/><path d="M337.9 363.3L338.0 361.3L339.2 359.1L342.6 359.1L342.6 358.2L341.1 355.9L341.1 354.4L346.0 354.4L346.0 356.5L345.8 359.6L346.5 359.6L347.4 360.1L348.4 360.0L347.2 361.1L346.0 361.8L345.8 362.4L346.0 362.9L345.4 363.6L344.8 363.7L345.0 364.1L344.5 364.4L343.6 365.0L343.5 365.4L340.5 364.9Z" fill="#1c2a44"/><path d="M253.2 257.0L254.8 262.8L255.1 265.4L254.8 273.5L253.8 277.9L254.5 284.2L254.0 286.6L255.6 290.0L257.7 294.3L259.0 296.0L260.5 298.9L263.9 305.3L267.9 306.9L269.7 307.8L272.5 310.3L273.1 311.9L279.3 311.3L279.1 311.9L289.0 315.6L296.3 315.6L296.3 314.0L300.7 314.0L304.9 317.7L305.9 320.7L309.6 322.5L311.1 320.1L314.0 320.1L317.7 324.9L319.0 327.0L320.0 330.2L324.5 331.6L325.0 326.7L326.5 324.3L330.2 322.5L331.5 321.0L333.8 320.4L338.5 320.7L341.1 321.9L343.2 322.2L345.3 322.5L344.8 318.9L349.0 318.6L352.9 318.3L356.0 320.4L359.1 319.2L362.0 322.5L362.8 326.1L364.6 329.9L366.4 332.2L367.5 333.6L368.8 333.6L369.6 329.9L368.5 324.9L366.4 319.5L366.2 316.5L367.7 313.1L371.9 309.7L375.1 307.5L377.7 305.3L379.5 304.0L381.3 302.1L380.3 297.9L379.5 294.3L382.6 293.3L381.6 289.6L385.0 288.9L385.5 285.9L389.4 284.5L391.0 283.1L394.4 282.4L395.9 281.4L394.1 278.6L394.1 276.8L396.2 274.3L400.6 272.1L403.7 270.6L403.2 269.1L401.7 267.3L401.7 262.0L400.4 260.8L398.0 260.8L395.9 263.5L395.1 266.5L392.3 269.1L383.1 269.9L379.2 273.2L378.2 275.0L372.4 276.1L372.7 277.5L369.3 279.3L366.4 280.0L363.6 281.7L361.8 280.7L363.6 277.1L364.4 275.0L363.8 272.1L363.1 268.8L360.4 266.9L360.7 266.2L359.1 264.3L357.3 263.9L347.9 257.3L344.8 258.5L341.7 257.3L339.6 258.1L337.0 256.6L334.4 256.2L332.5 255.8L331.8 255.4L331.2 253.0L330.2 253.0L330.2 254.6L256.9 254.6L258.2 257.0L257.2 258.1ZM210.7 144.5L210.7 203.2L215.9 204.8L219.9 210.4L222.5 207.4L225.1 205.8L226.4 208.4L230.6 212.9L235.0 221.7L239.4 225.0L239.4 227.7L236.8 228.2L234.2 224.5L230.3 218.8L228.7 214.4L226.4 213.9L222.2 213.9L219.1 212.4L213.6 207.4L206.6 204.3L202.9 204.8L197.7 202.2L194.8 200.0L191.9 201.1L192.5 204.9L188.0 206.4L185.7 207.9L182.8 208.9L183.6 201.1L186.5 199.5L182.3 201.1L180.5 204.3L176.8 208.2L178.6 210.4L176.3 214.4L173.4 216.4L170.8 217.9L170.0 219.9L166.1 222.2L165.3 224.5L162.2 226.4L160.4 226.4L158.0 227.3L155.4 229.1L153.1 230.5L148.7 231.8L148.4 230.9L151.1 229.1L153.6 227.7L156.5 225.0L159.6 224.5L160.9 222.6L164.6 219.8L165.1 218.8L167.2 216.9L167.6 213.4L169.0 210.4L165.9 211.9L165.1 210.9L163.5 212.9L162.0 210.4L161.2 211.9L160.1 209.4L157.5 211.4L156.0 211.4L155.7 208.4L156.2 206.9L154.7 204.8L151.3 205.8L148.9 203.2L147.3 202.2L147.2 199.0L145.3 196.8L146.3 193.5L148.4 190.7L149.2 187.8L151.4 187.2L153.1 187.8L155.2 185.5L157.3 185.5L159.1 183.7L158.7 181.3L157.3 180.1L159.1 177.7L157.5 177.7L154.8 178.9L153.9 180.7L152.0 178.9L148.2 179.8L144.5 178.3L143.4 175.9L140.0 172.1L143.7 169.5L149.4 166.3L151.7 166.3L151.3 169.5L156.7 169.5L154.7 165.6L151.5 163.0L149.7 159.6L147.1 156.8L143.4 154.0L145.0 150.4L149.7 150.4L152.8 146.8L153.6 143.0L156.2 140.0L158.8 139.2L163.8 135.2L166.1 136.0L170.0 131.2L174.0 133.6L176.0 136.8L177.1 135.2L181.5 136.0L181.3 137.6L185.4 139.2L188.0 138.4L193.5 140.7L198.5 141.5L200.6 142.3L203.9 140.7L207.9 143.4Z" fill="#5ba0f3"/><path d="M210.7 144.5L215.7 146.0L219.9 149.7L222.5 150.4L224.8 147.5L227.9 145.3L231.9 146.0L235.8 143.0L239.9 140.7L241.8 143.8L243.6 142.3L244.4 138.4L246.2 139.2L250.4 146.0L254.0 140.7L254.3 146.8L257.4 145.3L258.5 143.0L261.6 143.8L265.8 146.8L271.8 149.7L275.4 151.2L278.0 150.4L281.4 154.0L277.8 157.5L282.5 158.9L289.5 158.2L291.8 156.8L294.5 161.0L297.3 157.5L294.7 154.7L296.3 152.2L299.5 151.9L301.6 151.2L303.8 152.6L306.5 156.8L309.3 156.1L313.9 159.2L317.9 158.2L321.8 158.2L321.3 154.0L323.7 152.6L327.8 155.4L327.8 161.6L329.4 156.1L331.5 156.1L332.8 149.0L329.9 144.5L326.8 141.5L327.1 132.8L330.2 127.1L333.6 127.9L336.2 132.0L339.8 140.7L337.5 144.5L342.4 146.0L342.3 153.3L345.8 147.5L349.0 152.6L348.2 157.5L350.7 162.3L353.4 157.5L355.2 151.2L355.5 143.0L359.1 143.8L363.1 144.5L366.4 148.2L366.7 151.9L364.7 156.1L366.4 159.6L366.2 163.0L361.2 167.6L357.6 168.2L354.7 166.3L353.9 169.5L351.6 175.2L350.8 177.7L347.7 181.9L344.0 182.5L341.9 184.9L341.7 188.4L338.8 189.5L335.4 194.0L332.8 200.0L331.8 204.3L331.5 210.4L335.4 210.9L336.4 215.9L337.8 219.3L341.4 218.3L346.4 220.5L349.0 222.2L350.8 224.5L353.9 225.9L356.8 227.7L361.0 228.2L363.8 228.7L363.6 232.3L364.4 236.7L366.2 241.4L370.1 245.6L372.2 244.4L373.5 239.7L372.2 233.2L370.4 230.5L374.5 228.7L377.4 225.4L379.0 222.2L378.7 218.8L376.9 214.7L373.7 210.9L376.9 205.6L375.6 200.8L374.8 192.4L376.6 190.9L381.1 192.4L383.7 192.9L386.0 191.8L388.4 193.5L391.5 196.8L392.3 199.0L397.0 199.0L397.0 203.7L397.7 209.9L400.1 210.9L402.0 213.9L405.8 210.9L408.4 205.3L410.0 203.2L412.1 207.9L415.5 213.9L418.4 219.9L417.3 223.1L420.7 225.4L423.0 228.2L427.2 229.6L429.0 230.9L430.1 234.5L431.9 235.4L433.0 236.7L433.2 241.8L431.4 243.1L429.6 244.8L425.1 246.0L422.0 249.8L417.6 250.2L411.8 249.3L407.9 249.3L405.3 249.8L403.2 252.6L399.8 254.2L396.0 259.7L393.0 263.1L395.1 262.4L399.4 257.3L404.9 254.2L408.7 253.8L411.0 255.8L408.7 258.1L409.5 262.4L410.3 265.4L413.7 267.3L418.1 266.5L420.7 262.4L421.0 265.0L422.5 266.5L419.4 268.8L413.5 271.0L410.9 272.5L407.9 275.3L406.1 275.0L405.8 271.7L410.5 268.8L406.4 268.8L403.5 269.5L403.2 269.1L401.7 267.3L401.7 262.0L400.4 260.8L398.0 260.8L395.9 263.5L395.1 266.5L392.3 269.1L383.1 269.9L379.2 273.2L378.2 275.0L372.4 276.1L372.7 277.5L369.3 279.3L366.4 280.0L363.6 281.7L361.8 280.7L363.6 277.1L364.4 275.0L363.8 272.1L363.1 268.8L360.4 266.9L360.7 266.2L359.1 264.3L357.3 263.9L347.9 257.3L344.8 258.5L341.7 257.3L339.6 258.1L337.0 256.6L334.4 256.2L332.5 255.8L331.8 255.4L331.2 253.0L330.2 253.0L330.2 254.6L256.9 254.6L258.2 254.6L252.7 250.6L250.9 248.9L246.2 247.3L244.6 243.5L245.0 241.0L241.8 238.9L241.2 235.4L238.1 232.3L238.1 230.0L239.4 227.7L239.4 225.0L235.0 221.7L230.6 212.9L226.4 208.4L225.1 205.8L222.5 207.4L219.9 210.4L215.9 204.8L210.7 203.2Z" fill="#1f2c47"/><path d="M570.7 211.7L567.9 217.1L570.5 216.4L573.4 216.5L572.7 220.4L570.4 224.6L573.0 224.9L575.6 230.8L577.4 231.6L579.0 236.6L579.7 238.3L582.9 239.1L582.6 241.8L581.2 243.1L582.3 245.3L579.9 247.4L576.4 247.4L572.0 248.5L570.8 247.7L569.1 249.6L566.7 249.2L564.8 250.7L563.4 249.9L567.3 245.6L569.6 244.7L565.5 244.0L564.8 242.3L567.5 241.0L566.1 238.7L566.6 235.8L570.4 236.2L570.8 233.7L569.0 230.8L565.9 230.1L565.2 228.8L566.2 226.8L565.3 225.5L563.9 227.7L563.8 223.2L562.5 220.8L563.4 215.8L565.4 211.8L567.5 212.2ZM563.7 231.1L562.3 234.2L560.4 233.3L558.8 233.3L559.3 230.9L558.8 228.5L560.9 228.3Z" fill="#263b5e"/><path d="M573.5 275.6L574.9 273.5L575.4 266.1L572.7 262.1L570.8 260.2L566.8 258.7L566.5 255.8L569.9 255.0L574.3 256.0L573.5 251.5L575.9 253.2L582.0 250.0L582.8 246.7L585.0 245.8L585.4 247.3L586.6 247.4L587.9 249.0L589.7 250.9L591.0 250.6L593.3 252.5L593.9 252.8L594.6 252.7L595.9 253.8L599.6 254.5L598.3 257.2L598.0 260.0L597.3 260.6L596.1 260.3L596.2 261.3L594.3 263.4L594.2 265.1L595.5 264.5L596.3 266.2L596.2 267.3L597.0 268.7L596.1 269.8L596.8 272.6L598.2 273.1L597.9 274.7L595.5 276.7L590.4 275.7L586.6 276.9L586.3 279.0L583.3 279.5L580.3 277.9L579.4 278.6L574.6 277.0Z" fill="#21345a"/><path d="M604.4 229.2L604.4 230.9L607.1 232.0L607.0 233.6L609.7 232.7L611.2 231.5L614.1 233.2L615.3 234.7L615.9 236.9L615.2 238.1L616.2 239.6L616.8 241.9L616.6 243.3L617.7 246.0L616.5 246.5L615.8 246.0L615.2 246.8L613.3 247.6L612.3 248.6L610.4 249.5L610.9 250.7L611.2 252.4L612.5 253.3L614.0 255.1L613.0 256.9L612.1 257.4L612.5 259.9L612.2 260.6L611.4 259.8L610.2 259.7L608.3 260.4L606.0 260.2L605.6 261.2L604.3 260.1L603.5 260.3L600.7 259.2L600.2 260.0L598.0 260.0L598.3 257.2L599.6 254.5L595.9 253.8L594.6 252.7L594.8 251.0L594.3 250.0L594.6 247.3L594.1 242.9L595.7 242.9L596.3 241.3L597.0 237.4L596.5 235.9L597.0 235.0L599.2 234.7L599.7 235.7L601.5 233.5L600.9 231.8L600.7 229.3L602.7 229.9Z" fill="#243a5e"/><path d="M587.1 245.0L588.5 243.9L590.8 237.6L594.3 235.8L596.5 235.9L597.0 237.4L596.3 241.3L595.7 242.9L594.1 242.9L594.6 247.3L593.1 246.3L591.5 244.5L589.1 245.3Z" fill="#1d2f58"/><path d="M554.9 281.1L555.1 278.6L554.0 277.0L557.7 274.4L560.9 275.1L564.4 275.1L567.2 275.7L569.3 275.5L573.5 275.6L574.6 277.0L579.4 278.6L580.3 277.9L583.3 279.5L586.3 279.0L586.4 281.1L584.0 283.4L580.6 284.1L580.4 285.3L578.8 287.2L577.8 289.9L578.8 291.8L577.3 293.3L576.7 295.5L574.7 296.2L572.9 298.7L567.1 298.6L565.5 299.8L564.5 301.0L562.3 299.5L561.5 297.9L559.1 297.3L559.2 296.2L560.2 294.0L559.3 293.1L560.0 290.9L558.9 288.8L560.1 288.6L560.6 286.5L560.6 283.8L561.8 282.8L561.1 281.1L559.6 281.0L559.1 281.4L557.6 281.4L557.0 279.7L555.9 280.2Z" fill="#151d2e"/><path d="M597.9 274.7L598.2 273.1L596.8 272.6L596.1 269.8L597.0 268.7L596.2 267.3L596.3 266.2L597.5 267.0L598.7 266.8L600.2 265.6L600.6 266.1L601.9 266.0L602.4 264.5L604.4 265.0L605.5 264.4L605.7 262.8L607.3 263.3L607.6 262.6L610.2 261.9L610.8 263.3L614.5 264.2L614.2 266.1L614.9 267.7L612.8 267.1L610.7 268.5L610.8 270.3L610.5 271.4L611.3 273.2L613.8 275.0L615.1 278.0L618.0 280.8L620.1 280.8L620.7 281.6L619.9 282.3L622.3 283.5L624.2 284.6L626.4 286.4L626.7 287.0L626.2 288.2L624.8 286.6L622.5 286.1L621.4 288.3L623.3 289.6L623.0 291.3L621.9 291.5L620.5 294.3L619.4 294.6L619.4 293.6L619.9 291.8L620.5 291.1L619.5 289.2L618.7 287.4L617.6 287.0L616.8 285.5L615.2 284.9L614.1 283.5L612.1 283.3L610.1 281.7L607.7 279.4L605.9 277.4L605.1 273.8L603.8 273.4L601.7 272.2L600.5 272.7L599.0 274.4L597.9 274.7Z" fill="#161f36"/><path d="M615.3 234.7L617.1 233.4L621.2 231.3L624.5 229.8L627.1 230.6L627.3 231.6L629.8 231.7L633.0 232.2L637.8 232.1L639.1 232.6L639.7 234.0L639.9 235.9L640.6 237.6L640.6 239.3L639.0 240.2L639.8 242.2L639.9 244.0L641.2 247.7L640.9 248.9L639.6 249.3L637.2 252.7L637.9 254.5L637.3 254.2L634.9 252.7L633.0 253.3L631.8 252.9L630.2 253.7L628.9 252.3L627.8 252.8L627.7 252.6L626.5 250.6L624.5 250.4L624.3 249.1L622.5 248.6L622.1 249.7L620.7 248.9L620.9 247.7L618.9 247.4L617.7 246.0L616.6 243.3L616.8 241.9L616.2 239.6L615.2 238.1L615.9 236.9Z" fill="#12182a"/><path d="M636.4 172.0L633.8 176.3L634.2 180.1L630.1 184.8L625.1 189.8L623.2 197.7L625.0 201.4L627.5 204.4L625.1 210.2L622.4 211.3L621.4 219.6L619.9 224.0L616.8 223.6L615.3 227.2L612.3 227.5L611.4 223.1L609.3 217.7L607.3 210.6L608.4 207.7L610.6 204.2L611.4 197.9L609.8 195.1L609.6 187.6L611.3 182.1L613.9 182.2L614.8 179.8L613.9 177.8L617.9 169.0L620.5 161.6L622.2 156.8L624.7 156.8L625.4 152.8L630.4 153.9L630.7 149.2L632.4 148.9L635.8 152.5L639.9 157.2L640.0 167.6L640.8 170.1Z" fill="#131a2b"/><path d="M810.4 343.6L808.6 343.6L805.4 344.2L805.5 346.3L804.1 347.9L800.4 349.8L797.4 353.0L795.5 354.8L792.9 356.5L792.9 357.8L791.6 358.5L789.2 359.5L788.0 359.6L787.2 361.6L787.8 365.1L787.9 367.4L786.8 369.9L786.8 374.4L785.4 374.6L784.3 376.6L785.1 377.4L782.7 378.2L781.8 380.0L780.7 380.7L778.3 378.3L777.1 374.6L776.1 371.9L775.2 370.7L773.8 368.1L773.1 364.7L772.7 363.0L770.3 359.3L769.2 354.1L768.4 350.5L768.4 347.2L767.9 344.6L764.2 346.2L762.3 345.9L758.9 342.5L760.1 341.5L759.4 340.4L756.3 338.0L758.1 336.1L763.8 336.1L763.3 333.6L761.8 332.1L761.5 329.9L759.8 328.6L762.7 325.5L765.7 325.7L768.4 322.6L770.1 319.6L772.6 316.5L772.6 314.4L774.8 312.6L772.7 311.1L771.8 309.0L770.9 306.2L772.1 304.8L776.1 305.6L779.0 305.2L781.5 302.5L784.3 306.2L784.1 308.7L785.1 310.4L785.0 311.9L783.1 311.5L783.9 314.9L786.4 316.8L790.1 319.0L788.4 320.3L787.4 323.1L789.9 324.2L792.4 325.7L795.8 327.4L799.4 327.7L800.9 329.2L802.9 329.5L806.0 330.2L808.2 330.1L808.5 329.0L808.1 327.1L808.3 325.8L809.9 325.2L810.1 327.5L810.2 328.1L812.6 329.2L814.2 328.8L816.4 329.0L818.5 328.9L818.7 327.1L817.7 326.2L819.8 325.8L822.1 323.6L825.2 321.7L827.3 322.4L829.2 321.2L830.4 323.0L829.5 324.3L832.4 324.7L832.5 325.8L831.6 326.4L831.8 328.2L830.0 327.7L826.6 329.7L826.7 331.3L825.2 333.8L825.1 335.1L824.0 337.5L821.9 336.9L821.8 339.8L821.2 340.8L821.5 342.0L820.2 342.6L818.9 338.1L818.1 338.2L817.7 340.0L816.3 338.5L817.1 336.9L818.3 336.7L819.5 334.3L817.9 333.8L815.5 333.8L813.0 333.4L812.8 331.4L811.6 331.3L809.5 330.0L808.6 332.0L810.5 333.5L808.8 334.6L808.2 335.7L809.9 336.4L809.4 338.1L810.3 340.3L810.7 342.6Z" fill="#16213b"/></svg><span class="abs" style="left:48px;top:38px;font-size:28px;line-height:36px;color:#e6e6e6;letter-spacing:0.38px;white-space:nowrap">Viewers by region</span><div class="abs" style="left:876px;top:32px;width:189px;height:48px;border-radius:10px;background:#000"></div><div class="abs" style="left:880px;top:36px;width:84px;height:40px;border-radius:7px;background:#1d1d1d"></div><span class="abs" style="left:894px;top:38px;font-size:28px;line-height:36px;color:#e2e2e2;white-space:nowrap">Map</span><span class="abs" style="left:979px;top:38px;font-size:28px;line-height:36px;color:#b4b4b4;white-space:nowrap">Table</span><svg class="q" style="left:1081px;top:42px" width="28" height="28" viewBox="0 0 28 28"><circle cx="14" cy="14" r="12.6" fill="none" stroke="#e0e0e0" stroke-width="2.4"/><path d="M10.6 11.2a3.4 3.4 0 1 1 4.9 3.05c-.95.5-1.5 1.1-1.5 2.1v.5" fill="none" stroke="#e0e0e0" stroke-width="2.28" stroke-linecap="round"/><circle cx="14" cy="20.3" r="1.35" fill="#e0e0e0"/></svg></div><div class="card" style="left:1735px;top:443px;width:1161px;height:644px"><span class="abs" style="left:48px;top:38px;font-size:32px;line-height:40px;color:#2a6ee0;letter-spacing:0.3px;white-space:nowrap">Viewers</span><span class="abs" style="left:227px;top:38px;font-size:32px;line-height:40px;color:#d9d9d9;letter-spacing:0.3px;white-space:nowrap">Ads</span><span class="abs" style="left:346px;top:38px;font-size:32px;line-height:40px;color:#d9d9d9;letter-spacing:0.3px;white-space:nowrap">CDN</span><span class="abs" style="left:478px;top:38px;font-size:32px;line-height:40px;color:#d9d9d9;letter-spacing:0.3px;white-space:nowrap">Storage</span><div class="abs" style="left:0;top:112px;width:100%;height:2px;background:#2c2c2c"></div><div class="abs" style="left:48px;top:110px;width:115px;height:4px;background:#2a6ee0"></div><svg class="q" style="left:1081px;top:44px" width="28" height="28" viewBox="0 0 28 28"><circle cx="14" cy="14" r="12.6" fill="none" stroke="#e0e0e0" stroke-width="2.4"/><path d="M10.6 11.2a3.4 3.4 0 1 1 4.9 3.05c-.95.5-1.5 1.1-1.5 2.1v.5" fill="none" stroke="#e0e0e0" stroke-width="2.28" stroke-linecap="round"/><circle cx="14" cy="20.3" r="1.35" fill="#e0e0e0"/></svg><svg class="abs" style="left:0;top:0" width="1157" height="640" viewBox="0 0 1157 640" font-family="Liberation Sans, Arial, sans-serif"><line x1="139" y1="446.0" x2="146" y2="446.0" stroke="#3a3a3a" stroke-width="2"/><text x="131" y="454.5" text-anchor="end" font-size="24" fill="#6e6e6e">0</text><line x1="139" y1="388.8" x2="146" y2="388.8" stroke="#3a3a3a" stroke-width="2"/><line x1="147" y1="388.8" x2="1095" y2="388.8" stroke="#181818" stroke-width="2"/><text x="131" y="397.3" text-anchor="end" font-size="24" fill="#6e6e6e">200</text><line x1="139" y1="331.6" x2="146" y2="331.6" stroke="#3a3a3a" stroke-width="2"/><line x1="147" y1="331.6" x2="1095" y2="331.6" stroke="#181818" stroke-width="2"/><text x="131" y="340.1" text-anchor="end" font-size="24" fill="#6e6e6e">400</text><line x1="139" y1="274.4" x2="146" y2="274.4" stroke="#3a3a3a" stroke-width="2"/><line x1="147" y1="274.4" x2="1095" y2="274.4" stroke="#181818" stroke-width="2"/><text x="131" y="282.9" text-anchor="end" font-size="24" fill="#6e6e6e">600</text><line x1="139" y1="217.2" x2="146" y2="217.2" stroke="#3a3a3a" stroke-width="2"/><line x1="147" y1="217.2" x2="1095" y2="217.2" stroke="#181818" stroke-width="2"/><text x="131" y="225.7" text-anchor="end" font-size="24" fill="#6e6e6e">800</text><line x1="139" y1="160.0" x2="146" y2="160.0" stroke="#3a3a3a" stroke-width="2"/><line x1="147" y1="160.0" x2="1095" y2="160.0" stroke="#181818" stroke-width="2"/><text x="131" y="168.5" text-anchor="end" font-size="24" fill="#6e6e6e">1k</text><rect x="154.0" y="247.5" width="71" height="198.5" fill="#4b4b4b"/><line x1="189.5" y1="446" x2="189.5" y2="454" stroke="#2e2e2e" stroke-width="2"/><text x="189.5" y="486" text-anchor="middle" font-size="24" fill="#6e6e6e">Jan 1</text><rect x="233.1" y="214.9" width="71" height="231.1" fill="#4b4b4b"/><line x1="268.6" y1="446" x2="268.6" y2="454" stroke="#2e2e2e" stroke-width="2"/><text x="268.6" y="486" text-anchor="middle" font-size="24" fill="#6e6e6e">Jan 2</text><rect x="312.1" y="321.9" width="71" height="124.1" fill="#4b4b4b"/><line x1="347.6" y1="446" x2="347.6" y2="454" stroke="#2e2e2e" stroke-width="2"/><text x="347.6" y="486" text-anchor="middle" font-size="24" fill="#6e6e6e">Jan 3</text><rect x="391.1" y="322.4" width="71" height="123.6" fill="#4b4b4b"/><line x1="426.6" y1="446" x2="426.6" y2="454" stroke="#2e2e2e" stroke-width="2"/><text x="426.6" y="486" text-anchor="middle" font-size="24" fill="#6e6e6e">Jan 4</text><rect x="470.2" y="238.1" width="71" height="207.9" fill="#4b4b4b"/><line x1="505.7" y1="446" x2="505.7" y2="454" stroke="#2e2e2e" stroke-width="2"/><text x="505.7" y="486" text-anchor="middle" font-size="24" fill="#6e6e6e">Jan 5</text><rect x="549.2" y="210.1" width="71" height="235.9" fill="#4b4b4b"/><line x1="584.8" y1="446" x2="584.8" y2="454" stroke="#2e2e2e" stroke-width="2"/><text x="584.8" y="486" text-anchor="middle" font-size="24" fill="#6e6e6e">Jan 6</text><rect x="628.3" y="184.9" width="71" height="261.1" fill="#4b4b4b"/><line x1="663.8" y1="446" x2="663.8" y2="454" stroke="#2e2e2e" stroke-width="2"/><text x="663.8" y="486" text-anchor="middle" font-size="24" fill="#6e6e6e">Jan 7</text><rect x="707.4" y="172.3" width="71" height="273.7" fill="#4b4b4b"/><line x1="742.9" y1="446" x2="742.9" y2="454" stroke="#2e2e2e" stroke-width="2"/><text x="742.9" y="486" text-anchor="middle" font-size="24" fill="#6e6e6e">Jan 8</text><rect x="786.4" y="180.3" width="71" height="265.7" fill="#4b4b4b"/><line x1="821.9" y1="446" x2="821.9" y2="454" stroke="#2e2e2e" stroke-width="2"/><text x="821.9" y="486" text-anchor="middle" font-size="24" fill="#6e6e6e">Jan 9</text><rect x="865.4" y="305.3" width="71" height="140.7" fill="#4b4b4b"/><line x1="900.9" y1="446" x2="900.9" y2="454" stroke="#2e2e2e" stroke-width="2"/><text x="900.9" y="486" text-anchor="middle" font-size="24" fill="#6e6e6e">Jan 10</text><rect x="944.5" y="259.0" width="71" height="187.0" fill="#4b4b4b"/><line x1="980.0" y1="446" x2="980.0" y2="454" stroke="#2e2e2e" stroke-width="2"/><text x="980.0" y="486" text-anchor="middle" font-size="24" fill="#6e6e6e">Jan 11</text><rect x="1023.5" y="187.7" width="71" height="258.3" fill="#4b4b4b"/><line x1="1059.0" y1="446" x2="1059.0" y2="454" stroke="#2e2e2e" stroke-width="2"/><text x="1059.0" y="486" text-anchor="middle" font-size="24" fill="#6e6e6e">Jan 12</text><text x="624" y="542" text-anchor="middle" font-size="24" fill="#b5b5b5">Date</text><text transform="translate(43,303) rotate(-90)" text-anchor="middle" font-size="24" fill="#b5b5b5">Count</text></svg></div><div class="abs" style="left:558px;top:1187px;width:2338px;height:2px;background:#2b2b2b"></div><div class="abs" style="left:558px;top:1103px;width:170px;height:86px;border:2px solid #2b2b2b;border-bottom:2px solid #141414;border-radius:16px 16px 0 0;background:#141414;color:#2a6ee0;font-size:32px;line-height:40px;text-align:center;padding-top:22px;letter-spacing:0.3px">Movies</div><div class="abs" style="left:733px;top:1103px;width:158px;height:86px;border:2px solid #2b2b2b;border-bottom:2px solid #2b2b2b;border-radius:16px 16px 0 0;background:#0c0c0c;color:#d9d9d9;font-size:32px;line-height:40px;text-align:center;padding-top:22px;letter-spacing:0.3px">Series</div><div class="abs" style="left:895px;top:1103px;width:148px;height:86px;border:2px solid #2b2b2b;border-bottom:2px solid #2b2b2b;border-radius:16px 16px 0 0;background:#0c0c0c;color:#d9d9d9;font-size:32px;line-height:40px;text-align:center;padding-top:22px;letter-spacing:0.3px">News</div><div class="abs" style="left:1047px;top:1103px;width:203px;height:86px;border:2px solid #2b2b2b;border-bottom:2px solid #2b2b2b;border-radius:16px 16px 0 0;background:#0c0c0c;color:#d9d9d9;font-size:32px;line-height:40px;text-align:center;padding-top:22px;letter-spacing:0.3px">Channels</div><div class="abs" style="left:1254px;top:1103px;width:187px;height:86px;border:2px solid #2b2b2b;border-bottom:2px solid #2b2b2b;border-radius:16px 16px 0 0;background:#0c0c0c;color:#d9d9d9;font-size:32px;line-height:40px;text-align:center;padding-top:22px;letter-spacing:0.3px">Banners</div><div class="abs" style="left:558px;top:1189px;width:2338px;height:900px;background:#141414"></div><div class="abs" style="left:590px;top:1221px;width:2274px;height:94px;background:#1d1d1d;border-radius:16px 16px 0 0;border-bottom:2px solid #2d2d2d"></div><span class="abs" style="left:606px;top:1250px;font-size:28px;line-height:36px;font-weight:700;color:#e4e4e4;white-space:nowrap">Most Popular</span><svg class="q" style="left:800px;top:1254px" width="28" height="28" viewBox="0 0 28 28"><circle cx="14" cy="14" r="12.6" fill="none" stroke="#8c8c8c" stroke-width="2.2"/><path d="M10.6 11.2a3.4 3.4 0 1 1 4.9 3.05c-.95.5-1.5 1.1-1.5 2.1v.5" fill="none" stroke="#8c8c8c" stroke-width="2.09" stroke-linecap="round"/><circle cx="14" cy="20.3" r="1.35" fill="#8c8c8c"/></svg><span class="abs" style="left:2280px;top:1250px;font-size:28px;line-height:36px;font-weight:700;color:#e4e4e4;white-space:nowrap;letter-spacing:0.2px">This Month</span><svg class="q" style="left:2447px;top:1254px" width="28" height="28" viewBox="0 0 28 28"><circle cx="14" cy="14" r="12.6" fill="none" stroke="#8c8c8c" stroke-width="2.2"/><path d="M10.6 11.2a3.4 3.4 0 1 1 4.9 3.05c-.95.5-1.5 1.1-1.5 2.1v.5" fill="none" stroke="#8c8c8c" stroke-width="2.09" stroke-linecap="round"/><circle cx="14" cy="20.3" r="1.35" fill="#8c8c8c"/></svg><div class="abs" style="left:2562px;top:1246px;width:2px;height:44px;background:#303030"></div><span class="abs" style="left:2580px;top:1250px;font-size:28px;line-height:36px;font-weight:700;color:#e4e4e4;white-space:nowrap;letter-spacing:0.2px">Last Month</span><svg class="q" style="left:2747px;top:1254px" width="28" height="28" viewBox="0 0 28 28"><circle cx="14" cy="14" r="12.6" fill="none" stroke="#8c8c8c" stroke-width="2.2"/><path d="M10.6 11.2a3.4 3.4 0 1 1 4.9 3.05c-.95.5-1.5 1.1-1.5 2.1v.5" fill="none" stroke="#8c8c8c" stroke-width="2.09" stroke-linecap="round"/><circle cx="14" cy="20.3" r="1.35" fill="#8c8c8c"/></svg><div class="abs" style="left:590px;top:1315px;width:196px;height:112px;background:#262626;border-bottom:2px solid #2b2b2b"></div><div class="abs" style="left:786px;top:1425px;width:2078px;height:2px;background:#2b2b2b"></div><div class="abs" style="left:651px;top:1315px;width:73px;height:110px;overflow:hidden"><svg width="73" height="110" viewBox="0 0 73 110" preserveAspectRatio="none" style="display:block"><rect width="73" height="110" fill="#e3e8f0"/><defs><linearGradient id="t0g" x1="0" y1="0" x2="1" y2="1"><stop offset="0" stop-color="#dfe5ee"/><stop offset="1" stop-color="#eef1f6"/></linearGradient></defs><rect width="73" height="110" fill="url(#t0g)"/><path d="M0 2 L42 1 Q54 5 53 17 L50 25 Q32 34 22 28 L0 22Z" fill="#c9652c"/><path d="M0 8 L12 6 L22 18 L20 24 L0 18Z" fill="#b8966a"/><path d="M24 6 L48 5 Q52 12 50 20 L34 27 Q26 20 24 6Z" fill="#e9b65a" opacity=".75"/><path d="M28 10l18-2M30 15l19-3M32 20l16-4" stroke="#b03a1c" stroke-width="2"/><path d="M10 24 L11 56 M11 56 L2 80 M11 56 L30 78 M2 80 L22 84" stroke="#b3ad92" stroke-width="2.200" fill="none"/><rect x="23" y="44" width="3" height="10" fill="#fff" stroke="#c9ccd2" stroke-width=".6"/><path d="M59 29 Q53 27 49 36 L26 100 Q24 109 31 107 Q37 105 40 96 L60 42 Q62 31 59 29Z" fill="#4b4a3c"/><path d="M50 50 L35 92" stroke="#8f8d78" stroke-width="2.400"/><path d="M54 46 L38 94" stroke="#2f2e26" stroke-width="1.200"/><circle cx="36" cy="43" r="4.200" fill="#e9e6cf"/><circle cx="46" cy="47" r="4.600" fill="#efecd8"/><circle cx="46" cy="47" r="1.600" fill="#9a9782"/><circle cx="37" cy="43" r="1.400" fill="#6a6856"/><circle cx="20" cy="95" r="4" fill="#e9e6cf"/><circle cx="28" cy="100" r="4.400" fill="#efecd8"/><circle cx="28" cy="100" r="1.500" fill="#9a9782"/></svg></div><span class="abs" style="left:802px;top:1353px;font-size:28px;line-height:36px;color:#dedede;white-space:nowrap;letter-spacing:0.4px">The Great Adventure</span><span class="abs" style="left:2314px;top:1353px;width:200px;text-align:center;font-size:28px;line-height:36px;color:#dedede;letter-spacing:1.400px">6562</span><span class="abs" style="left:2614px;top:1353px;width:200px;text-align:center;font-size:28px;line-height:36px;color:#dedede;letter-spacing:1.400px">4328</span><div class="abs" style="left:590px;top:1427px;width:196px;height:112px;background:#262626;border-bottom:2px solid #2b2b2b"></div><div class="abs" style="left:786px;top:1537px;width:2078px;height:2px;background:#2b2b2b"></div><div class="abs" style="left:651px;top:1427px;width:73px;height:110px;overflow:hidden"><svg width="73" height="110" viewBox="0 0 73 110" preserveAspectRatio="none" style="display:block"><defs><linearGradient id="t1g" x1="0" y1="0" x2="1" y2="1"><stop offset="0" stop-color="#7a2a1c"/><stop offset=".45" stop-color="#b44a16"/><stop offset="1" stop-color="#8a2f10"/></linearGradient></defs><rect width="73" height="110" fill="url(#t1g)"/><path d="M0 0 L40 0 Q48 10 46 24 Q36 40 22 52 Q8 62 0 64Z" fill="#6e2a22"/><path d="M10 8 Q30 4 44 14 Q40 28 26 40 Q14 30 10 8Z" fill="#a34634" opacity=".8"/><path d="M46 0 L73 0 L73 60 Q66 40 58 28 Q52 14 46 0Z" fill="#8c3a14"/><path d="M0 70 Q14 60 28 48 Q38 38 44 26 L50 32 Q44 50 34 66 Q22 86 8 110 L0 110Z" fill="#e07a2c"/><path d="M0 84 Q14 70 26 56 Q20 80 6 110 L0 110Z" fill="#f0903a"/><path d="M52 30 Q62 40 66 58 Q72 80 73 110 L56 110 Q60 80 54 56 Q50 42 52 30Z" fill="#cf6420"/><path d="M47 16 Q52 14 51 22 Q54 30 48 36 Q44 44 42 40 Q46 30 45 24Z" fill="#f8e0cc"/><path d="M42 42 Q48 46 46 56 Q40 66 34 66 Q36 54 42 42Z" fill="#8a6a9c"/><path d="M34 66 Q44 62 50 70 Q56 90 50 110 L30 110 Q28 84 34 66Z" fill="#5a2418"/><path d="M36 76 Q44 74 46 84 Q46 100 40 106 Q34 96 36 76Z" fill="#3e1a22" opacity=".8"/></svg></div><span class="abs" style="left:802px;top:1465px;font-size:28px;line-height:36px;color:#dedede;white-space:nowrap;letter-spacing:0.4px">City Lights</span><span class="abs" style="left:2314px;top:1465px;width:200px;text-align:center;font-size:28px;line-height:36px;color:#dedede;letter-spacing:1.400px">4769</span><span class="abs" style="left:2614px;top:1465px;width:200px;text-align:center;font-size:28px;line-height:36px;color:#dedede;letter-spacing:1.400px">5918</span><div class="abs" style="left:590px;top:1539px;width:196px;height:112px;background:#262626;border-bottom:2px solid #2b2b2b"></div><div class="abs" style="left:786px;top:1649px;width:2078px;height:2px;background:#2b2b2b"></div><div class="abs" style="left:651px;top:1539px;width:73px;height:110px;overflow:hidden"><svg width="73" height="110" viewBox="0 0 73 110" preserveAspectRatio="none" style="display:block"><rect width="73" height="110" fill="#f6f4ee"/><rect x="0" y="36" width="34" height="66" fill="#5d8a9b"/><rect x="0" y="36" width="34" height="3" fill="#9fbcc4"/><rect x="0" y="42" width="34" height="1.500" fill="#a9c6cf" opacity=".8"/><rect x="0" y="49" width="34" height="1.500" fill="#a9c6cf" opacity=".8"/><rect x="0" y="56" width="34" height="1.500" fill="#a9c6cf" opacity=".8"/><rect x="0" y="63" width="34" height="1.500" fill="#a9c6cf" opacity=".8"/><rect x="0" y="70" width="34" height="1.500" fill="#a9c6cf" opacity=".8"/><rect x="0" y="77" width="34" height="1.500" fill="#a9c6cf" opacity=".8"/><rect x="0" y="84" width="34" height="1.500" fill="#a9c6cf" opacity=".8"/><rect x="0" y="91" width="34" height="1.500" fill="#a9c6cf" opacity=".8"/><rect x="4" y="38" width="1.200" height="62" fill="#b7d0d7" opacity=".7"/><rect x="10" y="38" width="1.200" height="62" fill="#b7d0d7" opacity=".7"/><rect x="16" y="38" width="1.200" height="62" fill="#b7d0d7" opacity=".7"/><rect x="22" y="38" width="1.200" height="62" fill="#b7d0d7" opacity=".7"/><rect x="28" y="38" width="1.200" height="62" fill="#b7d0d7" opacity=".7"/><path d="M2 62 Q6 56 10 62 Q14 56 18 62 Q20 68 14 70 L12 88 L10 88 L9 70 Q2 70 2 62Z" fill="#2f5058" opacity=".85"/><path d="M34 36 L34 74 Q36 96 50 110 L73 110 L73 36Z" fill="#f4f1ea"/><path d="M34 74 Q36 96 50 110 L0 110 L0 98 L34 98Z" fill="#6c9099"/><rect x="0" y="100" width="40" height="10" fill="#7fa0a6"/><path d="M44 104 L73 100 L73 110 L48 110Z" fill="#dcd8cf"/><path d="M64 104l6-3" stroke="#c9b56a" stroke-width="1.500"/></svg></div><span class="abs" style="left:802px;top:1577px;font-size:28px;line-height:36px;color:#dedede;white-space:nowrap;letter-spacing:0.4px">Mountain Journey</span><span class="abs" style="left:2314px;top:1577px;width:200px;text-align:center;font-size:28px;line-height:36px;color:#dedede;letter-spacing:1.400px">2556</span><span class="abs" style="left:2614px;top:1577px;width:200px;text-align:center;font-size:28px;line-height:36px;color:#dedede;letter-spacing:1.400px">3046</span><div class="abs" style="left:590px;top:1651px;width:196px;height:112px;background:#262626;border-bottom:2px solid #2b2b2b"></div><div class="abs" style="left:786px;top:1761px;width:2078px;height:2px;background:#2b2b2b"></div><div class="abs" style="left:651px;top:1651px;width:73px;height:110px;overflow:hidden"><svg width="73" height="110" viewBox="0 0 73 110" preserveAspectRatio="none" style="display:block"><defs><linearGradient id="t3g" x1="0" y1="0" x2="0" y2="1"><stop offset="0" stop-color="#ffffff"/><stop offset=".55" stop-color="#fdf7f4"/><stop offset="1" stop-color="#f3dcd2"/></linearGradient><radialGradient id="t3r" cx="0" cy=".8" r=".7"><stop offset="0" stop-color="#fff" stop-opacity=".95"/><stop offset="1" stop-color="#fff" stop-opacity="0"/></radialGradient></defs><rect width="73" height="110" fill="url(#t3g)"/><path d="M0 86 Q12 80 24 74 Q38 66 52 66 Q62 62 73 60 L73 110 L0 110Z" fill="#8b6353"/><path d="M30 84 Q44 78 58 80 Q66 78 73 76 L73 110 L22 110Z" fill="#9c7558"/><path d="M0 92 Q10 84 26 80 Q20 96 18 110 L0 110Z" fill="#c9a592"/><rect width="73" height="110" fill="url(#t3r)"/></svg></div><span class="abs" style="left:802px;top:1689px;font-size:28px;line-height:36px;color:#dedede;white-space:nowrap;letter-spacing:0.4px">Space Odyssey</span><span class="abs" style="left:2314px;top:1689px;width:200px;text-align:center;font-size:28px;line-height:36px;color:#dedede;letter-spacing:1.400px">1680</span><span class="abs" style="left:2614px;top:1689px;width:200px;text-align:center;font-size:28px;line-height:36px;color:#dedede;letter-spacing:1.400px">2191</span><div class="abs" style="left:590px;top:1763px;width:196px;height:112px;background:#262626;border-bottom:2px solid #2b2b2b"></div><div class="abs" style="left:786px;top:1873px;width:2078px;height:2px;background:#2b2b2b"></div><div class="abs" style="left:651px;top:1763px;width:73px;height:110px;overflow:hidden"><svg width="73" height="110" viewBox="0 0 73 110" preserveAspectRatio="none" style="display:block"><defs><linearGradient id="t4g" x1="0" y1="0" x2="0" y2="1"><stop offset="0" stop-color="#cfd0d6"/><stop offset=".3" stop-color="#c3c3cb"/><stop offset=".5" stop-color="#d3c9c8"/><stop offset=".6" stop-color="#b9b9c4"/></linearGradient></defs><rect width="73" height="110" fill="url(#t4g)"/><path d="M30 12 Q50 6 73 14 L73 22 Q52 18 36 20Z" fill="#a9abb8" opacity=".8"/><path d="M44 54 Q54 48 62 52 Q68 48 73 50 L73 70 L40 70Z" fill="#5f6b82"/><path d="M0 40 L8 35 Q18 44 28 56 Q44 68 60 72 L73 74 L73 86 L0 86Z" fill="#3f4a60"/><path d="M2 39 L8 35 L12 40 L8 42Z" fill="#9aa2b2"/><path d="M0 78 Q14 76 30 76 Q46 74 56 80 Q48 90 30 92 Q12 92 0 90Z" fill="#a9c3cc"/><path d="M0 78 Q8 78 14 80 Q8 90 0 90Z" fill="#5aa6b8"/><path d="M0 96 Q16 92 30 88 Q44 92 52 94 L54 84 L57 94 Q64 86 73 82 L73 110 L0 110Z" fill="#151b25"/></svg></div><span class="abs" style="left:802px;top:1801px;font-size:28px;line-height:36px;color:#dedede;white-space:nowrap;letter-spacing:0.4px">Ocean Dreams</span><span class="abs" style="left:2314px;top:1801px;width:200px;text-align:center;font-size:28px;line-height:36px;color:#dedede;letter-spacing:1.400px">1565</span><span class="abs" style="left:2614px;top:1801px;width:200px;text-align:center;font-size:28px;line-height:36px;color:#dedede;letter-spacing:1.400px">1766</span><div class="abs" style="left:590px;top:1875px;width:196px;height:112px;background:#262626;border-bottom:2px solid #2b2b2b"></div><div class="abs" style="left:786px;top:1985px;width:2078px;height:2px;background:#2b2b2b"></div><div class="abs" style="left:651px;top:1875px;width:73px;height:110px;overflow:hidden"><svg width="73" height="110" viewBox="0 0 73 110" preserveAspectRatio="none" style="display:block"><defs><linearGradient id="t5g" x1="0" y1="0" x2=".4" y2="1"><stop offset="0" stop-color="#9cc3ec"/><stop offset=".3" stop-color="#3d86da"/><stop offset=".6" stop-color="#1554b8"/><stop offset="1" stop-color="#0b2f86"/></linearGradient></defs><rect width="73" height="110" fill="url(#t5g)"/><path d="M0 0 L40 0 Q54 8 73 6 L73 16 Q50 22 30 18 Q12 22 0 16Z" fill="#e9f1fa" opacity=".85"/><path d="M0 22 Q20 26 36 36 Q50 44 73 40 L73 48 Q48 56 30 48 Q14 40 0 40Z" fill="#d5e6f7" opacity=".7"/><path d="M0 46 Q18 52 34 60 Q40 66 36 72 Q18 66 0 66Z" fill="#b9d6f3" opacity=".6"/><path d="M30 58 Q38 54 40 60 Q38 70 34 80 Q32 70 30 58Z" fill="#eaf3fc" opacity=".8"/><path d="M56 30 l8 3 M60 36 l8 2 M40 92 l6 6 M50 96 l8 8 M60 88 l6 10 M46 104 l10 4" stroke="#e6f0fb" stroke-width="1.600" opacity=".8"/><path d="M0 78 Q20 84 40 100 L36 110 L0 110Z" fill="#0d3a9a" opacity=".8"/></svg></div><span class="abs" style="left:802px;top:1913px;font-size:28px;line-height:36px;color:#dedede;white-space:nowrap;letter-spacing:0.4px">Forest Tales</span><span class="abs" style="left:2314px;top:1913px;width:200px;text-align:center;font-size:28px;line-height:36px;color:#dedede;letter-spacing:1.400px">1426</span><span class="abs" style="left:2614px;top:1913px;width:200px;text-align:center;font-size:28px;line-height:36px;color:#dedede;letter-spacing:1.400px">1546</span><div class="abs" style="left:590px;top:1987px;width:196px;height:112px;background:#262626;border-bottom:2px solid #2b2b2b"></div><div class="abs" style="left:786px;top:2097px;width:2078px;height:2px;background:#2b2b2b"></div><div class="abs" style="left:651px;top:1987px;width:73px;height:110px;overflow:hidden"><svg width="73" height="110" viewBox="0 0 73 110" preserveAspectRatio="none" style="display:block"><rect width="73" height="110" fill="#c18a4c"/><rect x="66" y="0" width="7" height="110" fill="#b57c3e"/><path d="M62 26h11M62 52h11" stroke="#8e5d2a" stroke-width="1"/><rect x="0" y="8" width="66" height="102" rx="3" fill="#d7d9dd"/><rect x="0" y="8" width="66" height="46" rx="3" fill="#c9cbd0"/><rect x="2" y="12" width="60" height="37" fill="#020202"/><rect x="0" y="52" width="66" height="3" fill="#9fa1a6"/><rect x="4" y="58" width="58" height="24" rx="1.500" fill="#25262a"/><rect x="4" y="62" width="58" height="1" fill="#cfd1d5"/><rect x="4" y="66.5" width="58" height="1" fill="#cfd1d5"/><rect x="4" y="71" width="58" height="1" fill="#cfd1d5"/><rect x="4" y="75.5" width="58" height="1" fill="#cfd1d5"/><rect x="8" y="58" width=".8" height="20" fill="#cfd1d5"/><rect x="13" y="58" width=".8" height="20" fill="#cfd1d5"/><rect x="18" y="58" width=".8" height="20" fill="#cfd1d5"/><rect x="23" y="58" width=".8" height="20" fill="#cfd1d5"/><rect x="28" y="58" width=".8" height="20" fill="#cfd1d5"/><rect x="33" y="58" width=".8" height="20" fill="#cfd1d5"/><rect x="38" y="58" width=".8" height="20" fill="#cfd1d5"/><rect x="43" y="58" width=".8" height="20" fill="#cfd1d5"/><rect x="48" y="58" width=".8" height="20" fill="#cfd1d5"/><rect x="53" y="58" width=".8" height="20" fill="#cfd1d5"/><rect x="58" y="58" width=".8" height="20" fill="#cfd1d5"/><rect x="20" y="86" width="26" height="24" rx="1.500" fill="#c8cace" stroke="#b4b6ba" stroke-width=".8"/><rect x="68" y="54" width="5" height="26" rx="2" fill="#eceded"/></svg></div><span class="abs" style="left:802px;top:2025px;font-size:28px;line-height:36px;color:#dedede;white-space:nowrap;letter-spacing:0.4px">Urban Legend</span><span class="abs" style="left:2314px;top:2025px;width:200px;text-align:center;font-size:28px;line-height:36px;color:#dedede;letter-spacing:1.400px">1286</span><span class="abs" style="left:2614px;top:2025px;width:200px;text-align:center;font-size:28px;line-height:36px;color:#dedede;letter-spacing:1.400px">1286</span></div></body></html>
